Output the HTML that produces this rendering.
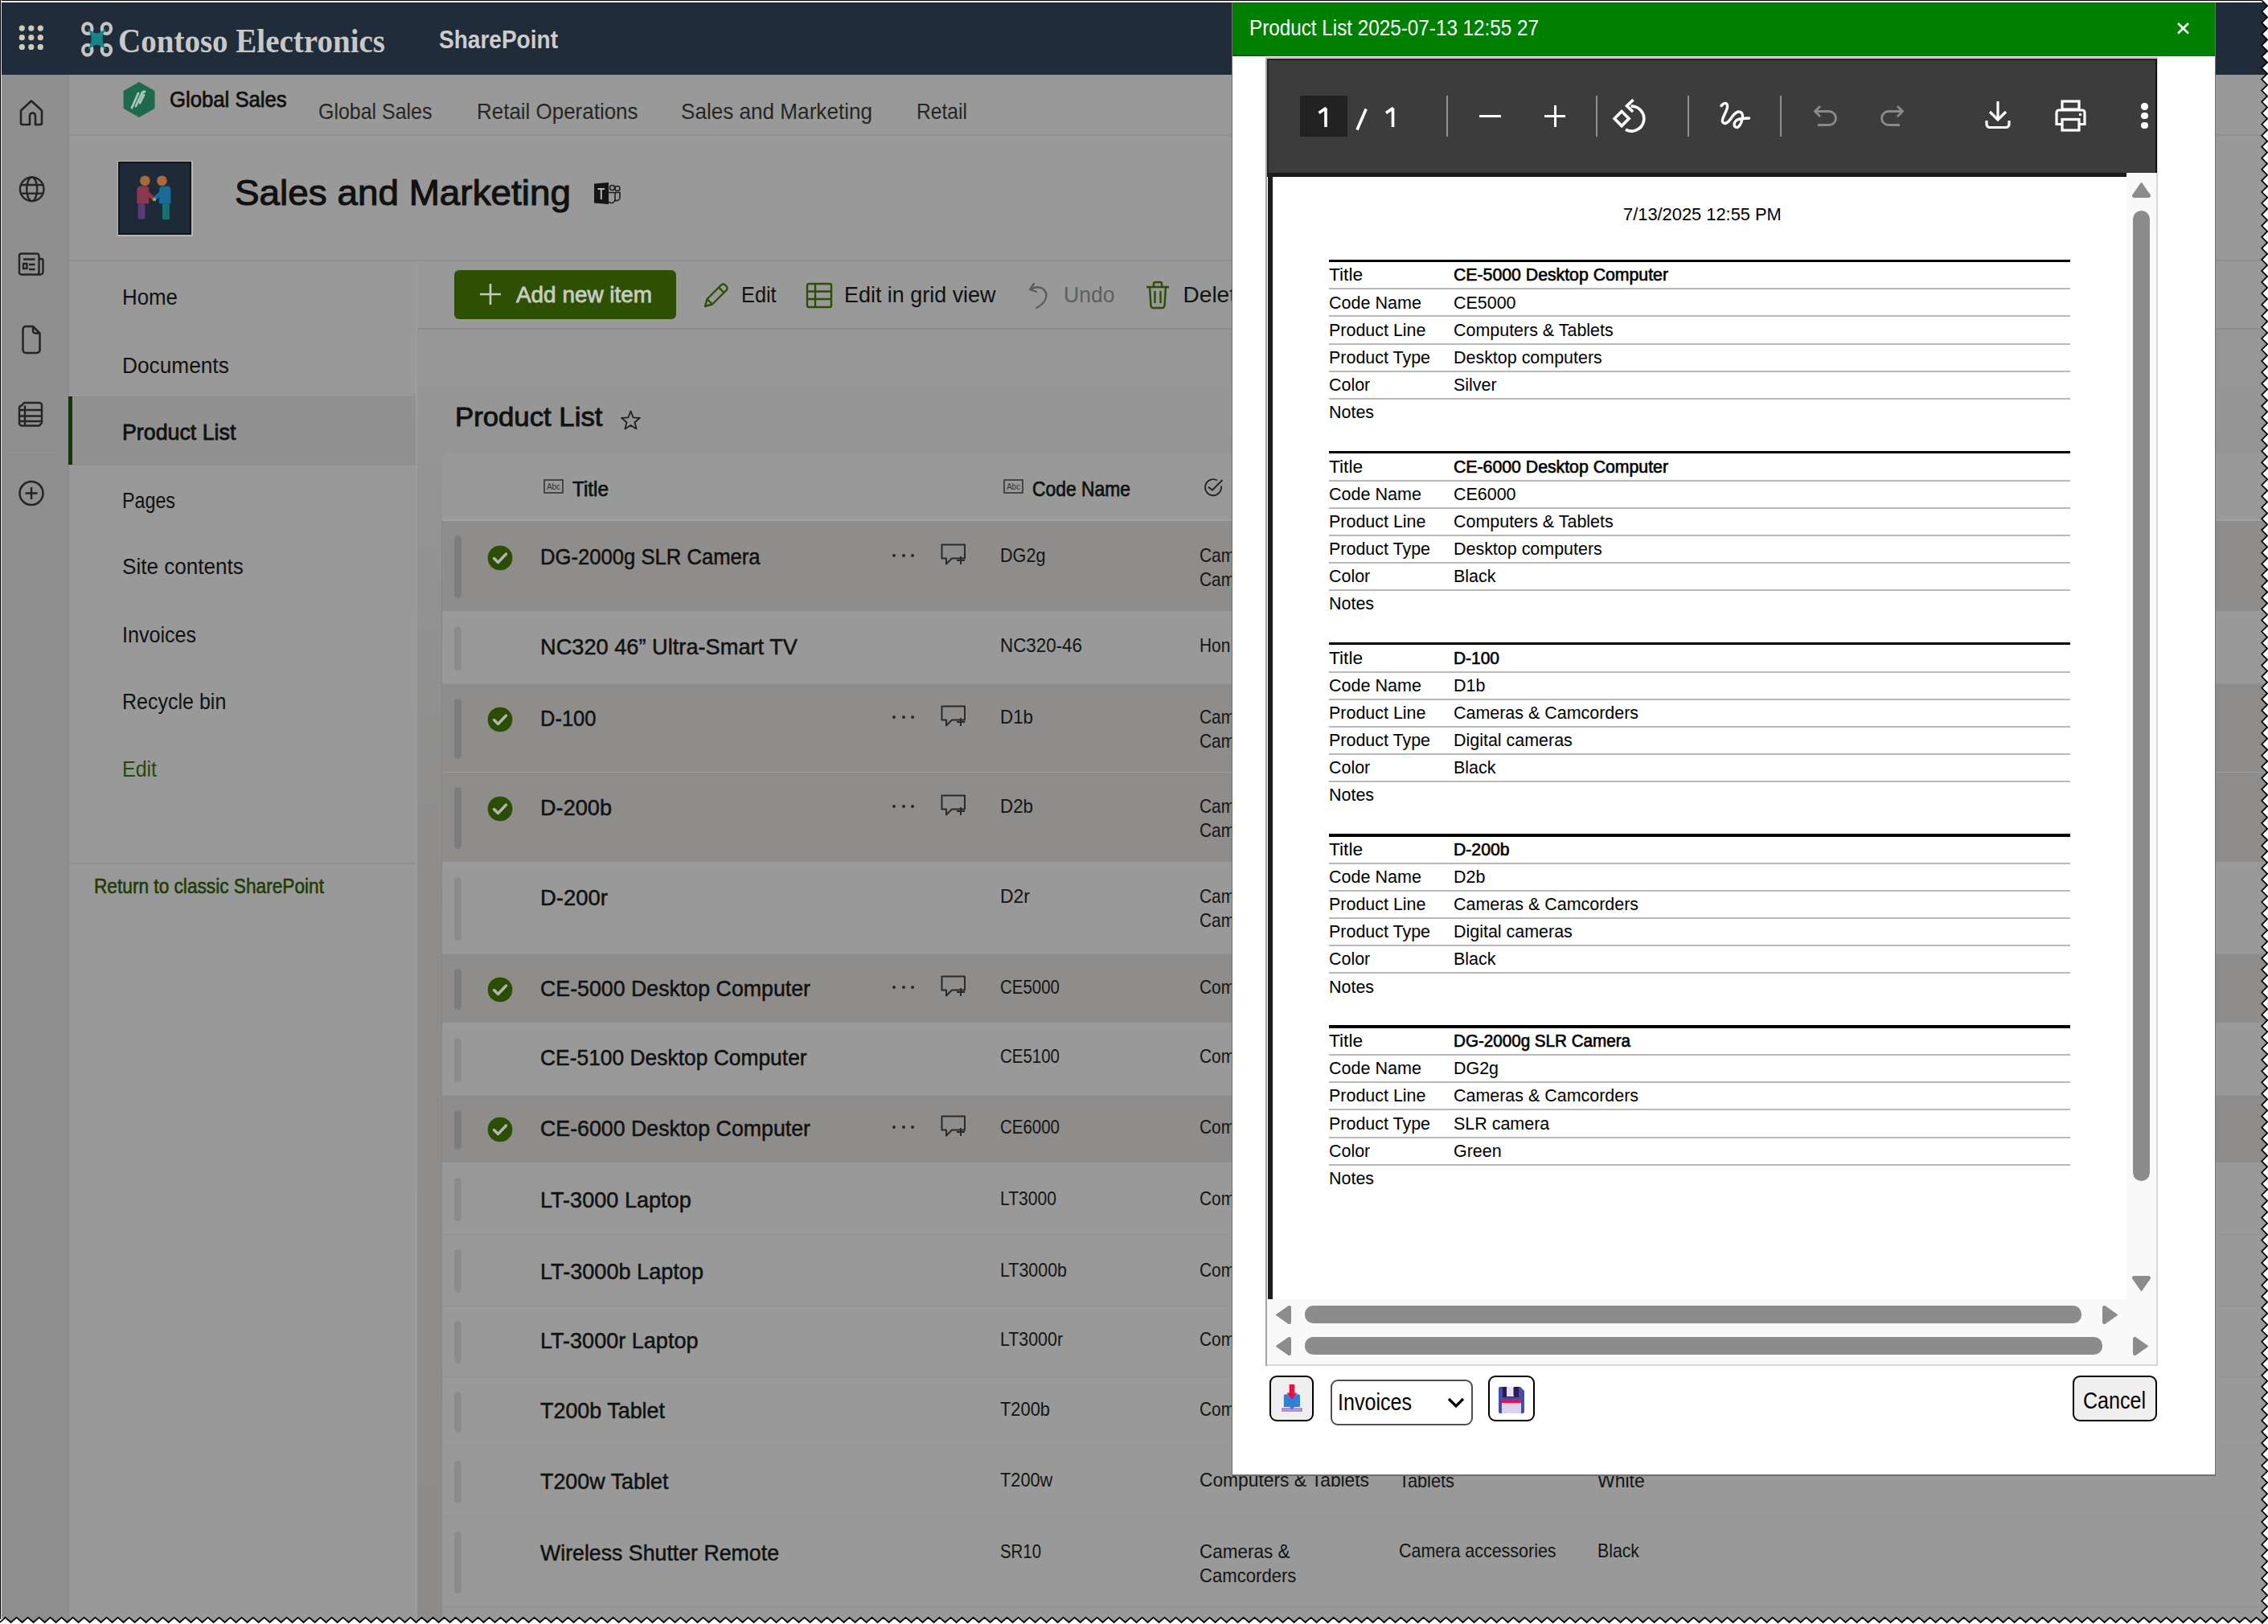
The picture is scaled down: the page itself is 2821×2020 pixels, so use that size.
<!DOCTYPE html>
<html><head><meta charset="utf-8"><title>Product List</title>
<style>html,body{margin:0;padding:0;width:2821px;height:2020px;overflow:hidden;background:#fff;position:relative}
body{font-family:'Liberation Sans',sans-serif}</style></head><body>
<div style="position:absolute;left:0px;top:0px;width:2821px;height:2020px;background:#999999;"></div>
<div style="position:absolute;left:0px;top:0px;width:2821px;height:93px;background:#202c3a;"></div>
<svg style="position:absolute;left:0px;top:0px;" width="80" height="90" viewBox="0 0 80 90"><circle cx="27.3" cy="35.1" r="3.6" fill="#cfc9b8"/><circle cx="27.3" cy="46.7" r="3.6" fill="#cfc9b8"/><circle cx="27.3" cy="58.4" r="3.6" fill="#cfc9b8"/><circle cx="38.8" cy="35.1" r="3.6" fill="#cfc9b8"/><circle cx="38.8" cy="46.7" r="3.6" fill="#cfc9b8"/><circle cx="38.8" cy="58.4" r="3.6" fill="#cfc9b8"/><circle cx="50.3" cy="35.1" r="3.6" fill="#cfc9b8"/><circle cx="50.3" cy="46.7" r="3.6" fill="#cfc9b8"/><circle cx="50.3" cy="58.4" r="3.6" fill="#cfc9b8"/></svg>
<svg style="position:absolute;left:90px;top:15px;" width="60" height="65" viewBox="0 0 60 65">
<g fill="none" stroke="#c6c4c2" stroke-width="4.3">
<ellipse cx="18.8" cy="20.5" rx="5.6" ry="6.3"/><ellipse cx="42.4" cy="20.5" rx="5.6" ry="6.3"/><ellipse cx="18.8" cy="47.2" rx="5.6" ry="6.3"/><ellipse cx="42.4" cy="47.2" rx="5.6" ry="6.3"/>
</g>
<path d="M18.5 19.5 Q26 26 30.6 26.5 Q35 26 42.5 19.5 Q37 28 37.5 33.8 Q38 40 42.5 48 Q35 41 30.6 40.5 Q26 41 18.5 48 Q23.5 40 23.7 33.8 Q23.5 28 18.5 19.5 Z" fill="#148585"/>
</svg>
<div id="t0" style="position:absolute;left:147px;top:29.64px;white-space:nowrap;font-family:'Liberation Serif', serif;font-size:42px;line-height:42px;font-weight:700;color:#c8c8c8;transform:scaleX(0.9290);transform-origin:0 0;">Contoso Electronics</div>
<div id="t1" style="position:absolute;left:545.6px;top:33.00px;white-space:nowrap;font-family:'Liberation Sans', sans-serif;font-size:32px;line-height:32px;font-weight:700;color:#cdcdcd;transform:scaleX(0.8761);transform-origin:0 0;">SharePoint</div>
<div style="position:absolute;left:0px;top:93px;width:86px;height:1927px;background:#8f8f8f;"></div>
<div style="position:absolute;left:84px;top:93px;width:2px;height:1927px;background:#8b8b8b;"></div>
<div style="position:absolute;left:2px;top:565px;width:73px;height:1px;background:#8a8a8a;"></div>
<svg style="position:absolute;left:22px;top:122px;" width="34" height="36" viewBox="0 0 34 36"><path d="M4 15.5 L17 3.5 L30 15.5 V31 a2 2 0 0 1 -2 2 H22 V22 a3.5 3.5 0 0 0 -7 0 V33 H6 a2 2 0 0 1 -2 -2 Z" fill="none" stroke="#242424" stroke-width="2.6" stroke-linejoin="round"/></svg>
<svg style="position:absolute;left:22px;top:217px;" width="36" height="36" viewBox="0 0 36 36"><g fill="none" stroke="#242424" stroke-width="2.4"><circle cx="17.7" cy="18.3" r="14.8"/><ellipse cx="17.7" cy="18.3" rx="6.5" ry="14.8"/><path d="M3 13 H32.4 M3 23.6 H32.4"/></g></svg>
<svg style="position:absolute;left:20px;top:313px;" width="38" height="31" viewBox="0 0 38 31"><g fill="none" stroke="#242424" stroke-width="2.4" stroke-linejoin="round"><path d="M4 5 a2.5 2.5 0 0 1 2.5 -2.5 H26 a2.5 2.5 0 0 1 2.5 2.5 V26 a2.5 2.5 0 0 1 -2.5 2.5 H6.5 A2.5 2.5 0 0 1 4 26 Z"/><path d="M28.5 9 H31.5 a2 2 0 0 1 2 2 V25 a3.5 3.5 0 0 1 -3.5 3.5 H26"/><path d="M9 9.5 H23.5 M16 16 H23.5 M16 22 H23.5"/><rect x="9" y="15" width="4.5" height="6"/></g></svg>
<svg style="position:absolute;left:24px;top:403px;" width="30" height="40" viewBox="0 0 30 40"><path d="M4.5 6.5 a3.5 3.5 0 0 1 3.5 -3.5 H17 L25.5 11.5 V32.5 a3.5 3.5 0 0 1 -3.5 3.5 H8 a3.5 3.5 0 0 1 -3.5 -3.5 Z M17 3 V8.5 a3 3 0 0 0 3 3 H25.5" fill="none" stroke="#242424" stroke-width="2.5" stroke-linejoin="round"/></svg>
<svg style="position:absolute;left:21px;top:498px;" width="36" height="36" viewBox="0 0 36 36"><g fill="none" stroke="#242424" stroke-width="2.4" stroke-linejoin="round"><path d="M6 6.5 L9 3 H28 a3 3 0 0 1 3 3 V28 L28 31.5 H6 a3 3 0 0 1 -3 -3 V9.5 a3 3 0 0 1 3 -3 Z" /><path d="M3 12 H31 M3 19.5 H31 M3 26 H31 M10 6.5 V31.5"/></g></svg>
<svg style="position:absolute;left:21px;top:596px;" width="36" height="36" viewBox="0 0 36 36"><g fill="none" stroke="#242424" stroke-width="2.5"><circle cx="18" cy="17.5" r="14.5"/><path d="M18 10 V25 M10.5 17.5 H25.5"/></g></svg>
<div style="position:absolute;left:86px;top:93px;width:2735px;height:76px;background:#999999;"></div>
<div style="position:absolute;left:86px;top:167px;width:2735px;height:2px;background:#8f8f8f;"></div>
<svg style="position:absolute;left:153px;top:102px;" width="40" height="45" viewBox="0 0 40 45"><path d="M20 1 L38.5 11.5 V32.5 L20 43 L1.5 32.5 V11.5 Z" fill="#1f6a4f" stroke="#1f6a4f" stroke-width="2" stroke-linejoin="round"/><g stroke="#a8c8b8" stroke-width="2.8" stroke-linecap="round" fill="none"><path d="M11 32 L19 14"/><path d="M16 30 L23 15 Q24 12 27 12"/><path d="M21 26 L26 16"/></g></svg>
<div id="t2" style="position:absolute;left:211px;top:110.10px;white-space:nowrap;font-family:'Liberation Sans', sans-serif;font-size:28px;line-height:28px;font-weight:400;color:#111111;transform:scaleX(0.9177);transform-origin:0 0;-webkit-text-stroke:0.75px #111111;">Global Sales</div>
<div id="t3" style="position:absolute;left:395.6px;top:125.00px;white-space:nowrap;font-family:'Liberation Sans', sans-serif;font-size:28px;line-height:28px;font-weight:400;color:#262626;transform:scaleX(0.8906);transform-origin:0 0;">Global Sales</div>
<div id="t4" style="position:absolute;left:592.5px;top:125.00px;white-space:nowrap;font-family:'Liberation Sans', sans-serif;font-size:28px;line-height:28px;font-weight:400;color:#262626;transform:scaleX(0.9268);transform-origin:0 0;">Retail Operations</div>
<div id="t5" style="position:absolute;left:847px;top:125.00px;white-space:nowrap;font-family:'Liberation Sans', sans-serif;font-size:28px;line-height:28px;font-weight:400;color:#262626;transform:scaleX(0.9324);transform-origin:0 0;">Sales and Marketing</div>
<div id="t6" style="position:absolute;left:1140px;top:125.00px;white-space:nowrap;font-family:'Liberation Sans', sans-serif;font-size:28px;line-height:28px;font-weight:400;color:#262626;transform:scaleX(0.8800);transform-origin:0 0;">Retail</div>
<div style="position:absolute;left:86px;top:169px;width:2735px;height:155px;background:#999999;"></div>
<div style="position:absolute;left:86px;top:323px;width:2735px;height:2px;background:#8f8f8f;"></div>
<div style="position:absolute;left:145.5px;top:199.5px;width:94px;height:94px;background:#bab6b2;"></div>
<svg style="position:absolute;left:147px;top:201px;" width="91" height="91" viewBox="0 0 91 91"><rect x="0" y="0" width="91" height="91" fill="#0c1520"/><rect x="2" y="2" width="87" height="87" fill="#1f2a38"/>
<g>
<circle cx="33.4" cy="23.7" r="6.3" fill="#a86a38"/><circle cx="54.4" cy="23.7" r="6.3" fill="#a86a38"/>
<path d="M23.4 52.2 V35 a4.5 4.5 0 0 1 4.5 -4.5 H34 a4.5 4.5 0 0 1 4.2 3 V52.2 Z" fill="#8a3850"/>
<path d="M36 39 L44.5 46.5" stroke="#8a3850" stroke-width="5" stroke-linecap="round"/>
<path d="M51 52.2 V35 a4.5 4.5 0 0 1 4.5 -4.5 H61 a4.5 4.5 0 0 1 4.4 4.5 V52.2 Z" fill="#1a6a9a"/>
<path d="M53 39 L45 46.5" stroke="#1a6a9a" stroke-width="5" stroke-linecap="round"/>
<circle cx="45" cy="47" r="2.2" fill="#b0a040"/>
<rect x="24.7" y="52.2" width="8.7" height="19.4" rx="1.5" fill="#5a3a78"/>
<rect x="55" y="52.2" width="8.8" height="20" rx="1.5" fill="#1a7070"/>
</g></svg>
<div id="t7" style="position:absolute;left:292px;top:216.75px;white-space:nowrap;font-family:'Liberation Sans', sans-serif;font-size:45px;line-height:45px;font-weight:400;color:#111;transform:scaleX(1.0189);transform-origin:0 0;-webkit-text-stroke:1.1px #111;">Sales and Marketing</div>
<svg style="position:absolute;left:735px;top:222px;" width="40" height="36" viewBox="0 0 40 36"><g fill="none" stroke="#1e1e1e" stroke-width="1.6"><circle cx="26.5" cy="11.5" r="3"/><circle cx="33" cy="12.5" r="3"/><path d="M21 17.5 H30 V26 a4.5 4.5 0 0 1 -9 0 Z"/><path d="M30 17.5 H36 V24 a4 4 0 0 1 -6 3"/></g><path d="M4 6.5 L22 5 V32 L4 30.5 Z" fill="#151515"/><path d="M8.5 13 H17 M12.8 13 V26" stroke="#b8b8b8" stroke-width="2"/></svg>
<div style="position:absolute;left:86px;top:325px;width:432px;height:1695px;background:#999999;"></div>
<div style="position:absolute;left:517px;top:325px;width:1.5px;height:1695px;background:#9c9c9c;"></div>
<div style="position:absolute;left:86px;top:493px;width:431px;height:85px;background:#919191;"></div>
<div style="position:absolute;left:86px;top:492.5px;width:431px;height:1.5px;background:#8d8d8d;"></div>
<div style="position:absolute;left:86px;top:577px;width:431px;height:1.5px;background:#8d8d8d;"></div>
<div style="position:absolute;left:85px;top:493px;width:4.5px;height:85px;background:#0e3a00;"></div>
<div style="position:absolute;left:86px;top:1073px;width:431px;height:2px;background:#8f8f8f;"></div>
<div id="t8" style="position:absolute;left:151.7px;top:355.82px;white-space:nowrap;font-family:'Liberation Sans', sans-serif;font-size:27.5px;line-height:27.5px;font-weight:400;color:#111111;transform:scaleX(0.9406);transform-origin:0 0;">Home</div>
<div id="t9" style="position:absolute;left:151.7px;top:440.82px;white-space:nowrap;font-family:'Liberation Sans', sans-serif;font-size:27.5px;line-height:27.5px;font-weight:400;color:#111111;transform:scaleX(0.9548);transform-origin:0 0;">Documents</div>
<div id="t10" style="position:absolute;left:151.7px;top:523.83px;white-space:nowrap;font-family:'Liberation Sans', sans-serif;font-size:27.5px;line-height:27.5px;font-weight:400;color:#111111;transform:scaleX(0.9737);transform-origin:0 0;-webkit-text-stroke:0.8px #111111;">Product List</div>
<div id="t11" style="position:absolute;left:151.7px;top:608.53px;white-space:nowrap;font-family:'Liberation Sans', sans-serif;font-size:27.5px;line-height:27.5px;font-weight:400;color:#111111;transform:scaleX(0.8463);transform-origin:0 0;">Pages</div>
<div id="t12" style="position:absolute;left:151.7px;top:691.23px;white-space:nowrap;font-family:'Liberation Sans', sans-serif;font-size:27.5px;line-height:27.5px;font-weight:400;color:#111111;transform:scaleX(0.9479);transform-origin:0 0;">Site contents</div>
<div id="t13" style="position:absolute;left:151.7px;top:775.83px;white-space:nowrap;font-family:'Liberation Sans', sans-serif;font-size:27.5px;line-height:27.5px;font-weight:400;color:#111111;transform:scaleX(0.9119);transform-origin:0 0;">Invoices</div>
<div id="t14" style="position:absolute;left:151.7px;top:858.53px;white-space:nowrap;font-family:'Liberation Sans', sans-serif;font-size:27.5px;line-height:27.5px;font-weight:400;color:#111111;transform:scaleX(0.9096);transform-origin:0 0;">Recycle bin</div>
<div id="t15" style="position:absolute;left:151.7px;top:942.83px;white-space:nowrap;font-family:'Liberation Sans', sans-serif;font-size:27.5px;line-height:27.5px;font-weight:400;color:#284a06;transform:scaleX(0.9074);transform-origin:0 0;">Edit</div>
<div id="t16" style="position:absolute;left:116.6px;top:1090.45px;white-space:nowrap;font-family:'Liberation Sans', sans-serif;font-size:25px;line-height:25px;font-weight:400;color:#1f3c06;transform:scaleX(0.9067);transform-origin:0 0;-webkit-text-stroke:0.6px #1f3c06;">Return to classic SharePoint</div>
<div style="position:absolute;left:519px;top:325px;width:2302px;height:84px;background:#999999;"></div>
<div style="position:absolute;left:519px;top:408px;width:2302px;height:2px;background:#8c8c8c;"></div>
<div style="position:absolute;left:565px;top:336px;width:276px;height:61px;border-radius:6px;background:#2d5003"></div>
<svg style="position:absolute;left:595px;top:351px;" width="30" height="30" viewBox="0 0 30 30"><path d="M15 2 V28 M2 15 H28" stroke="#c4c9bd" stroke-width="2.6"/></svg>
<div id="t17" style="position:absolute;left:642px;top:352.17px;white-space:nowrap;font-family:'Liberation Sans', sans-serif;font-size:28.5px;line-height:28.5px;font-weight:400;color:#c8ccc4;transform:scaleX(0.9787);transform-origin:0 0;-webkit-text-stroke:0.8px #c8ccc4;">Add new item</div>
<svg style="position:absolute;left:873px;top:349px;" width="36" height="36" viewBox="0 0 36 36"><path d="M4 32 L6.5 23 L24 5.5 a3.5 3.5 0 0 1 5 0 l1.5 1.5 a3.5 3.5 0 0 1 0 5 L13 29.5 Z M21 8.5 L27.5 15 M6.5 23 L13 29.5" fill="none" stroke="#2c4e05" stroke-width="2.4" stroke-linejoin="round"/></svg>
<div id="t18" style="position:absolute;left:922px;top:352.60px;white-space:nowrap;font-family:'Liberation Sans', sans-serif;font-size:28px;line-height:28px;font-weight:400;color:#111111;transform:scaleX(0.9036);transform-origin:0 0;">Edit</div>
<svg style="position:absolute;left:1002px;top:350px;" width="34" height="34" viewBox="0 0 34 34"><g fill="none" stroke="#2c4e05" stroke-width="2.4"><rect x="2" y="3" width="30" height="29" rx="2"/><path d="M2 12.5 H32 M2 22 H32 M12 3 V32"/></g></svg>
<div id="t19" style="position:absolute;left:1050px;top:352.60px;white-space:nowrap;font-family:'Liberation Sans', sans-serif;font-size:28px;line-height:28px;font-weight:400;color:#111111;transform:scaleX(0.9613);transform-origin:0 0;">Edit in grid view</div>
<svg style="position:absolute;left:1278px;top:349px;" width="28" height="36" viewBox="0 0 28 36"><path d="M8 4 L3 11 L11 14 M3.5 11 Q12 6 19 10 Q26 15 22 24 Q19 30 11 34" fill="none" stroke="#5c5c5c" stroke-width="2.3" stroke-linejoin="round" stroke-linecap="round"/></svg>
<div id="t20" style="position:absolute;left:1322.5px;top:352.60px;white-space:nowrap;font-family:'Liberation Sans', sans-serif;font-size:28px;line-height:28px;font-weight:400;color:#5f5f5f;transform:scaleX(0.9486);transform-origin:0 0;">Undo</div>
<svg style="position:absolute;left:1424px;top:349px;" width="32" height="36" viewBox="0 0 32 36"><g fill="none" stroke="#2c4e05" stroke-width="2.4" stroke-linejoin="round"><path d="M2 8 H30 M11 8 V4 a2 2 0 0 1 2 -2 h6 a2 2 0 0 1 2 2 V8 M6 8 L7.5 31 a3 3 0 0 0 3 3 h11 a3 3 0 0 0 3 -3 L26 8 M12.5 13 V28 M19.5 13 V28"/></g></svg>
<div id="t21" style="position:absolute;left:1471.6px;top:352.60px;white-space:nowrap;font-family:'Liberation Sans', sans-serif;font-size:28px;line-height:28px;font-weight:400;color:#111111;">Delete</div>
<div style="position:absolute;left:519px;top:410px;width:2302px;height:1610px;background:linear-gradient(to bottom, #979797 0px, #939393 250px, #8e8d8c 640px, #8d8c8b 100%);"></div>
<div id="t22" style="position:absolute;left:565.6px;top:501.95px;white-space:nowrap;font-family:'Liberation Sans', sans-serif;font-size:33px;line-height:33px;font-weight:400;color:#111;transform:scaleX(1.0525);transform-origin:0 0;-webkit-text-stroke:0.9px #111;">Product List</div>
<svg style="position:absolute;left:771px;top:509px;" width="27" height="27" viewBox="0 0 27 27"><path d="M13.5 2.5 L16.6 10.3 L25 10.8 L18.5 16.2 L20.6 24.4 L13.5 19.9 L6.4 24.4 L8.5 16.2 L2 10.8 L10.4 10.3 Z" fill="none" stroke="#202020" stroke-width="1.8" stroke-linejoin="round"/></svg>
<div style="position:absolute;left:550px;top:563px;width:2300px;height:1500px;border-radius:9px;background:#999999"></div>
<div style="position:absolute;left:550px;top:646px;width:2271px;height:2.5px;background:#a2a2a2;"></div>
<svg style="position:absolute;left:676px;top:596px;" width="26" height="19" viewBox="0 0 26 19"><rect x="1" y="1" width="23" height="16" fill="none" stroke="#333" stroke-width="1.6"/><text x="12.5" y="13" font-family="Liberation Sans" font-size="10" text-anchor="middle" fill="#333">Abc</text></svg>
<div id="t23" style="position:absolute;left:712px;top:594.70px;white-space:nowrap;font-family:'Liberation Sans', sans-serif;font-size:26px;line-height:26px;font-weight:400;color:#111111;transform:scaleX(0.9345);transform-origin:0 0;-webkit-text-stroke:0.75px #111111;">Title</div>
<svg style="position:absolute;left:1248px;top:596px;" width="26" height="19" viewBox="0 0 26 19"><rect x="1" y="1" width="23" height="16" fill="none" stroke="#333" stroke-width="1.6"/><text x="12.5" y="13" font-family="Liberation Sans" font-size="10" text-anchor="middle" fill="#333">Abc</text></svg>
<div id="t24" style="position:absolute;left:1284px;top:594.70px;white-space:nowrap;font-family:'Liberation Sans', sans-serif;font-size:26px;line-height:26px;font-weight:400;color:#111111;transform:scaleX(0.8794);transform-origin:0 0;-webkit-text-stroke:0.75px #111111;">Code Name</div>
<svg style="position:absolute;left:1495px;top:592px;" width="30" height="30" viewBox="0 0 30 30"><g fill="none" stroke="#222" stroke-width="1.9"><path d="M23.85 12.46 A10 10 0 1 1 19 5.54"/><path d="M7.8 13.8 L13 17.5 L25.5 5"/></g></svg>
<div style="position:absolute;left:550px;top:648px;width:2271px;height:113px;background:#8e8d8c;"></div>
<div style="position:absolute;left:550px;top:760px;width:2271px;height:2px;background:#9c9c9c;"></div>
<div style="position:absolute;left:565px;top:665.5px;width:9px;height:78px;border-radius:4.5px;background:#7c7c7c"></div>
<svg style="position:absolute;left:605px;top:677px;" width="34" height="34" viewBox="0 0 34 34"><circle cx="17" cy="17" r="16" fill="#2b4d04" stroke="#a0a0a0" stroke-width="0.8"/><path d="M9.5 17.5 L14.5 22.5 L24.5 12" fill="none" stroke="#b4b4b4" stroke-width="3.4" stroke-linecap="round" stroke-linejoin="round"/></svg>
<div style="position:absolute;left:1110.0px;top:689px;width:4px;height:4px;background:#2a2a2a;border-radius:2px"></div>
<div style="position:absolute;left:1121.5px;top:689px;width:4px;height:4px;background:#2a2a2a;border-radius:2px"></div>
<div style="position:absolute;left:1133.0px;top:689px;width:4px;height:4px;background:#2a2a2a;border-radius:2px"></div>
<svg style="position:absolute;left:1169px;top:675px;" width="35" height="32" viewBox="0 0 35 32"><path d="M2.5 2.5 H31 V19.5 H15 L8 26.5 V19.5 H2.5 Z" fill="none" stroke="#2a2a2a" stroke-width="2" stroke-linejoin="round"/><path d="M26 17 V27 M21 22 H31" stroke="#2a2a2a" stroke-width="2"/><rect x="20" y="16" width="12" height="12" fill="#8e8d8c" opacity="0"/></svg>
<div id="t25" style="position:absolute;left:672px;top:679.20px;white-space:nowrap;font-family:'Liberation Sans', sans-serif;font-size:28px;line-height:28px;font-weight:400;color:#111111;transform:scaleX(0.9156);transform-origin:0 0;-webkit-text-stroke:0.5px #111111;">DG-2000g SLR Camera</div>
<div id="t26" style="position:absolute;left:1244px;top:679.10px;white-space:nowrap;font-family:'Liberation Sans', sans-serif;font-size:24px;line-height:24px;font-weight:400;color:#141414;transform:scaleX(0.8995);transform-origin:0 0;">DG2g</div>
<div id="t27" style="position:absolute;left:1491.6px;top:679.10px;white-space:nowrap;font-family:'Liberation Sans', sans-serif;font-size:24px;line-height:24px;font-weight:400;color:#141414;transform:scaleX(0.8700);transform-origin:0 0;">Cam</div>
<div id="t28" style="position:absolute;left:1491.6px;top:709.10px;white-space:nowrap;font-family:'Liberation Sans', sans-serif;font-size:24px;line-height:24px;font-weight:400;color:#141414;transform:scaleX(0.8700);transform-origin:0 0;">Cam</div>
<div style="position:absolute;left:550px;top:761px;width:2271px;height:90px;background:#999999;"></div>
<div style="position:absolute;left:550px;top:850px;width:2271px;height:2px;background:#939393;"></div>
<div style="position:absolute;left:565px;top:778.5px;width:9px;height:55px;border-radius:4.5px;background:#8b8b8b"></div>
<div id="t29" style="position:absolute;left:672px;top:790.70px;white-space:nowrap;font-family:'Liberation Sans', sans-serif;font-size:28px;line-height:28px;font-weight:400;color:#111111;transform:scaleX(0.9716);transform-origin:0 0;-webkit-text-stroke:0.5px #111111;">NC320 46&#8221; Ultra-Smart TV</div>
<div id="t30" style="position:absolute;left:1244px;top:790.60px;white-space:nowrap;font-family:'Liberation Sans', sans-serif;font-size:24px;line-height:24px;font-weight:400;color:#141414;transform:scaleX(0.9323);transform-origin:0 0;">NC320-46</div>
<div id="t31" style="position:absolute;left:1491.6px;top:790.60px;white-space:nowrap;font-family:'Liberation Sans', sans-serif;font-size:24px;line-height:24px;font-weight:400;color:#141414;transform:scaleX(0.8700);transform-origin:0 0;">Hon</div>
<div style="position:absolute;left:550px;top:851px;width:2271px;height:110px;background:#8e8d8c;"></div>
<div style="position:absolute;left:550px;top:960px;width:2271px;height:2px;background:#9c9c9c;"></div>
<div style="position:absolute;left:565px;top:868.5px;width:9px;height:75px;border-radius:4.5px;background:#7c7c7c"></div>
<svg style="position:absolute;left:605px;top:877.5px;" width="34" height="34" viewBox="0 0 34 34"><circle cx="17" cy="17" r="16" fill="#2b4d04" stroke="#a0a0a0" stroke-width="0.8"/><path d="M9.5 17.5 L14.5 22.5 L24.5 12" fill="none" stroke="#b4b4b4" stroke-width="3.4" stroke-linecap="round" stroke-linejoin="round"/></svg>
<div style="position:absolute;left:1110.0px;top:889.5px;width:4px;height:4px;background:#2a2a2a;border-radius:2px"></div>
<div style="position:absolute;left:1121.5px;top:889.5px;width:4px;height:4px;background:#2a2a2a;border-radius:2px"></div>
<div style="position:absolute;left:1133.0px;top:889.5px;width:4px;height:4px;background:#2a2a2a;border-radius:2px"></div>
<svg style="position:absolute;left:1169px;top:875.5px;" width="35" height="32" viewBox="0 0 35 32"><path d="M2.5 2.5 H31 V19.5 H15 L8 26.5 V19.5 H2.5 Z" fill="none" stroke="#2a2a2a" stroke-width="2" stroke-linejoin="round"/><path d="M26 17 V27 M21 22 H31" stroke="#2a2a2a" stroke-width="2"/><rect x="20" y="16" width="12" height="12" fill="#8e8d8c" opacity="0"/></svg>
<div id="t32" style="position:absolute;left:672px;top:879.70px;white-space:nowrap;font-family:'Liberation Sans', sans-serif;font-size:28px;line-height:28px;font-weight:400;color:#111111;transform:scaleX(0.9113);transform-origin:0 0;-webkit-text-stroke:0.5px #111111;">D-100</div>
<div id="t33" style="position:absolute;left:1244px;top:879.60px;white-space:nowrap;font-family:'Liberation Sans', sans-serif;font-size:24px;line-height:24px;font-weight:400;color:#141414;transform:scaleX(0.9312);transform-origin:0 0;">D1b</div>
<div id="t34" style="position:absolute;left:1491.6px;top:879.60px;white-space:nowrap;font-family:'Liberation Sans', sans-serif;font-size:24px;line-height:24px;font-weight:400;color:#141414;transform:scaleX(0.8700);transform-origin:0 0;">Cam</div>
<div id="t35" style="position:absolute;left:1491.6px;top:909.60px;white-space:nowrap;font-family:'Liberation Sans', sans-serif;font-size:24px;line-height:24px;font-weight:400;color:#141414;transform:scaleX(0.8700);transform-origin:0 0;">Cam</div>
<div style="position:absolute;left:550px;top:961px;width:2271px;height:112px;background:#8e8d8c;"></div>
<div style="position:absolute;left:550px;top:1072px;width:2271px;height:2px;background:#9c9c9c;"></div>
<div style="position:absolute;left:565px;top:978.5px;width:9px;height:77px;border-radius:4.5px;background:#7c7c7c"></div>
<svg style="position:absolute;left:605px;top:989px;" width="34" height="34" viewBox="0 0 34 34"><circle cx="17" cy="17" r="16" fill="#2b4d04" stroke="#a0a0a0" stroke-width="0.8"/><path d="M9.5 17.5 L14.5 22.5 L24.5 12" fill="none" stroke="#b4b4b4" stroke-width="3.4" stroke-linecap="round" stroke-linejoin="round"/></svg>
<div style="position:absolute;left:1110.0px;top:1001px;width:4px;height:4px;background:#2a2a2a;border-radius:2px"></div>
<div style="position:absolute;left:1121.5px;top:1001px;width:4px;height:4px;background:#2a2a2a;border-radius:2px"></div>
<div style="position:absolute;left:1133.0px;top:1001px;width:4px;height:4px;background:#2a2a2a;border-radius:2px"></div>
<svg style="position:absolute;left:1169px;top:987px;" width="35" height="32" viewBox="0 0 35 32"><path d="M2.5 2.5 H31 V19.5 H15 L8 26.5 V19.5 H2.5 Z" fill="none" stroke="#2a2a2a" stroke-width="2" stroke-linejoin="round"/><path d="M26 17 V27 M21 22 H31" stroke="#2a2a2a" stroke-width="2"/><rect x="20" y="16" width="12" height="12" fill="#8e8d8c" opacity="0"/></svg>
<div id="t36" style="position:absolute;left:672px;top:991.20px;white-space:nowrap;font-family:'Liberation Sans', sans-serif;font-size:28px;line-height:28px;font-weight:400;color:#111111;transform:scaleX(0.9690);transform-origin:0 0;-webkit-text-stroke:0.5px #111111;">D-200b</div>
<div id="t37" style="position:absolute;left:1244px;top:991.10px;white-space:nowrap;font-family:'Liberation Sans', sans-serif;font-size:24px;line-height:24px;font-weight:400;color:#141414;transform:scaleX(0.9312);transform-origin:0 0;">D2b</div>
<div id="t38" style="position:absolute;left:1491.6px;top:991.10px;white-space:nowrap;font-family:'Liberation Sans', sans-serif;font-size:24px;line-height:24px;font-weight:400;color:#141414;transform:scaleX(0.8700);transform-origin:0 0;">Cam</div>
<div id="t39" style="position:absolute;left:1491.6px;top:1021.10px;white-space:nowrap;font-family:'Liberation Sans', sans-serif;font-size:24px;line-height:24px;font-weight:400;color:#141414;transform:scaleX(0.8700);transform-origin:0 0;">Cam</div>
<div style="position:absolute;left:550px;top:1073px;width:2271px;height:114px;background:#999999;"></div>
<div style="position:absolute;left:550px;top:1186px;width:2271px;height:2px;background:#939393;"></div>
<div style="position:absolute;left:565px;top:1090.5px;width:9px;height:79px;border-radius:4.5px;background:#8b8b8b"></div>
<div id="t40" style="position:absolute;left:672px;top:1102.70px;white-space:nowrap;font-family:'Liberation Sans', sans-serif;font-size:28px;line-height:28px;font-weight:400;color:#111111;transform:scaleX(0.9814);transform-origin:0 0;-webkit-text-stroke:0.5px #111111;">D-200r</div>
<div id="t41" style="position:absolute;left:1244px;top:1102.60px;white-space:nowrap;font-family:'Liberation Sans', sans-serif;font-size:24px;line-height:24px;font-weight:400;color:#141414;transform:scaleX(0.9568);transform-origin:0 0;">D2r</div>
<div id="t42" style="position:absolute;left:1491.6px;top:1102.60px;white-space:nowrap;font-family:'Liberation Sans', sans-serif;font-size:24px;line-height:24px;font-weight:400;color:#141414;transform:scaleX(0.8700);transform-origin:0 0;">Cam</div>
<div id="t43" style="position:absolute;left:1491.6px;top:1132.60px;white-space:nowrap;font-family:'Liberation Sans', sans-serif;font-size:24px;line-height:24px;font-weight:400;color:#141414;transform:scaleX(0.8700);transform-origin:0 0;">Cam</div>
<div style="position:absolute;left:550px;top:1187px;width:2271px;height:86px;background:#8e8d8c;"></div>
<div style="position:absolute;left:550px;top:1272px;width:2271px;height:2px;background:#9c9c9c;"></div>
<div style="position:absolute;left:565px;top:1204.5px;width:9px;height:51px;border-radius:4.5px;background:#7c7c7c"></div>
<svg style="position:absolute;left:605px;top:1213.5px;" width="34" height="34" viewBox="0 0 34 34"><circle cx="17" cy="17" r="16" fill="#2b4d04" stroke="#a0a0a0" stroke-width="0.8"/><path d="M9.5 17.5 L14.5 22.5 L24.5 12" fill="none" stroke="#b4b4b4" stroke-width="3.4" stroke-linecap="round" stroke-linejoin="round"/></svg>
<div style="position:absolute;left:1110.0px;top:1225.5px;width:4px;height:4px;background:#2a2a2a;border-radius:2px"></div>
<div style="position:absolute;left:1121.5px;top:1225.5px;width:4px;height:4px;background:#2a2a2a;border-radius:2px"></div>
<div style="position:absolute;left:1133.0px;top:1225.5px;width:4px;height:4px;background:#2a2a2a;border-radius:2px"></div>
<svg style="position:absolute;left:1169px;top:1211.5px;" width="35" height="32" viewBox="0 0 35 32"><path d="M2.5 2.5 H31 V19.5 H15 L8 26.5 V19.5 H2.5 Z" fill="none" stroke="#2a2a2a" stroke-width="2" stroke-linejoin="round"/><path d="M26 17 V27 M21 22 H31" stroke="#2a2a2a" stroke-width="2"/><rect x="20" y="16" width="12" height="12" fill="#8e8d8c" opacity="0"/></svg>
<div id="t44" style="position:absolute;left:672px;top:1215.70px;white-space:nowrap;font-family:'Liberation Sans', sans-serif;font-size:28px;line-height:28px;font-weight:400;color:#111111;transform:scaleX(0.9553);transform-origin:0 0;-webkit-text-stroke:0.5px #111111;">CE-5000 Desktop Computer</div>
<div id="t45" style="position:absolute;left:1244px;top:1215.60px;white-space:nowrap;font-family:'Liberation Sans', sans-serif;font-size:24px;line-height:24px;font-weight:400;color:#141414;transform:scaleX(0.8532);transform-origin:0 0;">CE5000</div>
<div id="t46" style="position:absolute;left:1491.6px;top:1215.60px;white-space:nowrap;font-family:'Liberation Sans', sans-serif;font-size:24px;line-height:24px;font-weight:400;color:#141414;transform:scaleX(0.8700);transform-origin:0 0;">Com</div>
<div style="position:absolute;left:550px;top:1273px;width:2271px;height:90px;background:#999999;"></div>
<div style="position:absolute;left:550px;top:1362px;width:2271px;height:2px;background:#939393;"></div>
<div style="position:absolute;left:565px;top:1290.5px;width:9px;height:55px;border-radius:4.5px;background:#8b8b8b"></div>
<div id="t47" style="position:absolute;left:672px;top:1301.70px;white-space:nowrap;font-family:'Liberation Sans', sans-serif;font-size:28px;line-height:28px;font-weight:400;color:#111111;transform:scaleX(0.9428);transform-origin:0 0;-webkit-text-stroke:0.5px #111111;">CE-5100 Desktop Computer</div>
<div id="t48" style="position:absolute;left:1244px;top:1301.60px;white-space:nowrap;font-family:'Liberation Sans', sans-serif;font-size:24px;line-height:24px;font-weight:400;color:#141414;transform:scaleX(0.8532);transform-origin:0 0;">CE5100</div>
<div id="t49" style="position:absolute;left:1491.6px;top:1301.60px;white-space:nowrap;font-family:'Liberation Sans', sans-serif;font-size:24px;line-height:24px;font-weight:400;color:#141414;transform:scaleX(0.8700);transform-origin:0 0;">Com</div>
<div style="position:absolute;left:550px;top:1363px;width:2271px;height:84px;background:#8e8d8c;"></div>
<div style="position:absolute;left:550px;top:1446px;width:2271px;height:2px;background:#9c9c9c;"></div>
<div style="position:absolute;left:565px;top:1380.5px;width:9px;height:49px;border-radius:4.5px;background:#7c7c7c"></div>
<svg style="position:absolute;left:605px;top:1388px;" width="34" height="34" viewBox="0 0 34 34"><circle cx="17" cy="17" r="16" fill="#2b4d04" stroke="#a0a0a0" stroke-width="0.8"/><path d="M9.5 17.5 L14.5 22.5 L24.5 12" fill="none" stroke="#b4b4b4" stroke-width="3.4" stroke-linecap="round" stroke-linejoin="round"/></svg>
<div style="position:absolute;left:1110.0px;top:1400px;width:4px;height:4px;background:#2a2a2a;border-radius:2px"></div>
<div style="position:absolute;left:1121.5px;top:1400px;width:4px;height:4px;background:#2a2a2a;border-radius:2px"></div>
<div style="position:absolute;left:1133.0px;top:1400px;width:4px;height:4px;background:#2a2a2a;border-radius:2px"></div>
<svg style="position:absolute;left:1169px;top:1386px;" width="35" height="32" viewBox="0 0 35 32"><path d="M2.5 2.5 H31 V19.5 H15 L8 26.5 V19.5 H2.5 Z" fill="none" stroke="#2a2a2a" stroke-width="2" stroke-linejoin="round"/><path d="M26 17 V27 M21 22 H31" stroke="#2a2a2a" stroke-width="2"/><rect x="20" y="16" width="12" height="12" fill="#8e8d8c" opacity="0"/></svg>
<div id="t50" style="position:absolute;left:672px;top:1390.20px;white-space:nowrap;font-family:'Liberation Sans', sans-serif;font-size:28px;line-height:28px;font-weight:400;color:#111111;transform:scaleX(0.9553);transform-origin:0 0;-webkit-text-stroke:0.5px #111111;">CE-6000 Desktop Computer</div>
<div id="t51" style="position:absolute;left:1244px;top:1390.10px;white-space:nowrap;font-family:'Liberation Sans', sans-serif;font-size:24px;line-height:24px;font-weight:400;color:#141414;transform:scaleX(0.8532);transform-origin:0 0;">CE6000</div>
<div id="t52" style="position:absolute;left:1491.6px;top:1390.10px;white-space:nowrap;font-family:'Liberation Sans', sans-serif;font-size:24px;line-height:24px;font-weight:400;color:#141414;transform:scaleX(0.8700);transform-origin:0 0;">Com</div>
<div style="position:absolute;left:550px;top:1447px;width:2271px;height:89px;background:#999999;"></div>
<div style="position:absolute;left:550px;top:1535px;width:2271px;height:2px;background:#939393;"></div>
<div style="position:absolute;left:565px;top:1464.5px;width:9px;height:54px;border-radius:4.5px;background:#8b8b8b"></div>
<div id="t53" style="position:absolute;left:672px;top:1479.20px;white-space:nowrap;font-family:'Liberation Sans', sans-serif;font-size:28px;line-height:28px;font-weight:400;color:#111111;transform:scaleX(0.9671);transform-origin:0 0;-webkit-text-stroke:0.5px #111111;">LT-3000 Laptop</div>
<div id="t54" style="position:absolute;left:1244px;top:1479.10px;white-space:nowrap;font-family:'Liberation Sans', sans-serif;font-size:24px;line-height:24px;font-weight:400;color:#141414;transform:scaleX(0.8791);transform-origin:0 0;">LT3000</div>
<div id="t55" style="position:absolute;left:1491.6px;top:1479.10px;white-space:nowrap;font-family:'Liberation Sans', sans-serif;font-size:24px;line-height:24px;font-weight:400;color:#141414;transform:scaleX(0.8700);transform-origin:0 0;">Com</div>
<div style="position:absolute;left:550px;top:1536px;width:2271px;height:89px;background:#999999;"></div>
<div style="position:absolute;left:550px;top:1624px;width:2271px;height:2px;background:#939393;"></div>
<div style="position:absolute;left:565px;top:1553.5px;width:9px;height:54px;border-radius:4.5px;background:#8b8b8b"></div>
<div id="t56" style="position:absolute;left:672px;top:1567.60px;white-space:nowrap;font-family:'Liberation Sans', sans-serif;font-size:28px;line-height:28px;font-weight:400;color:#111111;transform:scaleX(0.9682);transform-origin:0 0;-webkit-text-stroke:0.5px #111111;">LT-3000b Laptop</div>
<div id="t57" style="position:absolute;left:1244px;top:1567.50px;white-space:nowrap;font-family:'Liberation Sans', sans-serif;font-size:24px;line-height:24px;font-weight:400;color:#141414;transform:scaleX(0.8928);transform-origin:0 0;">LT3000b</div>
<div id="t58" style="position:absolute;left:1491.6px;top:1567.50px;white-space:nowrap;font-family:'Liberation Sans', sans-serif;font-size:24px;line-height:24px;font-weight:400;color:#141414;transform:scaleX(0.8700);transform-origin:0 0;">Com</div>
<div style="position:absolute;left:550px;top:1625px;width:2271px;height:88px;background:#999999;"></div>
<div style="position:absolute;left:550px;top:1712px;width:2271px;height:2px;background:#939393;"></div>
<div style="position:absolute;left:565px;top:1642.5px;width:9px;height:53px;border-radius:4.5px;background:#8b8b8b"></div>
<div id="t59" style="position:absolute;left:672px;top:1654.40px;white-space:nowrap;font-family:'Liberation Sans', sans-serif;font-size:28px;line-height:28px;font-weight:400;color:#111111;transform:scaleX(0.9660);transform-origin:0 0;-webkit-text-stroke:0.5px #111111;">LT-3000r Laptop</div>
<div id="t60" style="position:absolute;left:1244px;top:1654.30px;white-space:nowrap;font-family:'Liberation Sans', sans-serif;font-size:24px;line-height:24px;font-weight:400;color:#141414;transform:scaleX(0.8903);transform-origin:0 0;">LT3000r</div>
<div id="t61" style="position:absolute;left:1491.6px;top:1654.30px;white-space:nowrap;font-family:'Liberation Sans', sans-serif;font-size:24px;line-height:24px;font-weight:400;color:#141414;transform:scaleX(0.8700);transform-origin:0 0;">Com</div>
<div style="position:absolute;left:550px;top:1713px;width:2271px;height:86px;background:#999999;"></div>
<div style="position:absolute;left:550px;top:1798px;width:2271px;height:2px;background:#939393;"></div>
<div style="position:absolute;left:565px;top:1730.5px;width:9px;height:51px;border-radius:4.5px;background:#8b8b8b"></div>
<div id="t62" style="position:absolute;left:672px;top:1741.20px;white-space:nowrap;font-family:'Liberation Sans', sans-serif;font-size:28px;line-height:28px;font-weight:400;color:#111111;transform:scaleX(0.9604);transform-origin:0 0;-webkit-text-stroke:0.5px #111111;">T200b Tablet</div>
<div id="t63" style="position:absolute;left:1244px;top:1741.10px;white-space:nowrap;font-family:'Liberation Sans', sans-serif;font-size:24px;line-height:24px;font-weight:400;color:#141414;transform:scaleX(0.9109);transform-origin:0 0;">T200b</div>
<div id="t64" style="position:absolute;left:1491.6px;top:1741.10px;white-space:nowrap;font-family:'Liberation Sans', sans-serif;font-size:24px;line-height:24px;font-weight:400;color:#141414;transform:scaleX(0.8700);transform-origin:0 0;">Com</div>
<div style="position:absolute;left:550px;top:1799px;width:2271px;height:88px;background:#999999;"></div>
<div style="position:absolute;left:550px;top:1886px;width:2271px;height:2px;background:#939393;"></div>
<div style="position:absolute;left:565px;top:1816.5px;width:9px;height:53px;border-radius:4.5px;background:#8b8b8b"></div>
<div id="t65" style="position:absolute;left:672px;top:1829.20px;white-space:nowrap;font-family:'Liberation Sans', sans-serif;font-size:28px;line-height:28px;font-weight:400;color:#111111;transform:scaleX(0.9601);transform-origin:0 0;-webkit-text-stroke:0.5px #111111;">T200w Tablet</div>
<div id="t66" style="position:absolute;left:1244px;top:1829.10px;white-space:nowrap;font-family:'Liberation Sans', sans-serif;font-size:24px;line-height:24px;font-weight:400;color:#141414;transform:scaleX(0.9064);transform-origin:0 0;">T200w</div>
<div id="t67" style="position:absolute;left:1491.6px;top:1829.10px;white-space:nowrap;font-family:'Liberation Sans', sans-serif;font-size:24px;line-height:24px;font-weight:400;color:#141414;transform:scaleX(0.9490);transform-origin:0 0;">Computers &amp; Tablets</div>
<div style="position:absolute;left:550px;top:1887px;width:2271px;height:112px;background:#999999;"></div>
<div style="position:absolute;left:550px;top:1998px;width:2271px;height:2px;background:#939393;"></div>
<div style="position:absolute;left:565px;top:1904.5px;width:9px;height:77px;border-radius:4.5px;background:#8b8b8b"></div>
<div id="t68" style="position:absolute;left:672px;top:1917.70px;white-space:nowrap;font-family:'Liberation Sans', sans-serif;font-size:28px;line-height:28px;font-weight:400;color:#111111;transform:scaleX(0.9543);transform-origin:0 0;-webkit-text-stroke:0.5px #111111;">Wireless Shutter Remote</div>
<div id="t69" style="position:absolute;left:1244px;top:1917.60px;white-space:nowrap;font-family:'Liberation Sans', sans-serif;font-size:24px;line-height:24px;font-weight:400;color:#141414;transform:scaleX(0.8493);transform-origin:0 0;">SR10</div>
<div id="t70" style="position:absolute;left:1491.6px;top:1917.60px;white-space:nowrap;font-family:'Liberation Sans', sans-serif;font-size:24px;line-height:24px;font-weight:400;color:#141414;transform:scaleX(0.9363);transform-origin:0 0;">Cameras &amp;</div>
<div id="t71" style="position:absolute;left:1491.6px;top:1947.60px;white-space:nowrap;font-family:'Liberation Sans', sans-serif;font-size:24px;line-height:24px;font-weight:400;color:#141414;transform:scaleX(0.9212);transform-origin:0 0;">Camcorders</div>
<div style="position:absolute;left:549px;top:648px;width:1.2px;height:1372px;background:#878787;"></div>
<div id="t72" style="position:absolute;left:1739.8px;top:1829.60px;white-space:nowrap;font-family:'Liberation Sans', sans-serif;font-size:24px;line-height:24px;font-weight:400;color:#141414;transform:scaleX(0.9073);transform-origin:0 0;">Tablets</div>
<div id="t73" style="position:absolute;left:1987.3px;top:1829.60px;white-space:nowrap;font-family:'Liberation Sans', sans-serif;font-size:24px;line-height:24px;font-weight:400;color:#141414;transform:scaleX(0.9567);transform-origin:0 0;">White</div>
<div id="t74" style="position:absolute;left:1739.8px;top:1917.00px;white-space:nowrap;font-family:'Liberation Sans', sans-serif;font-size:24px;line-height:24px;font-weight:400;color:#141414;transform:scaleX(0.8942);transform-origin:0 0;">Camera accessories</div>
<div id="t75" style="position:absolute;left:1987.3px;top:1917.00px;white-space:nowrap;font-family:'Liberation Sans', sans-serif;font-size:24px;line-height:24px;font-weight:400;color:#141414;transform:scaleX(0.8860);transform-origin:0 0;">Black</div>
<div style="position:absolute;left:1532px;top:0px;width:1224px;height:1835.5px;background:#707070;"></div>
<div style="position:absolute;left:1533px;top:0px;width:1222px;height:1834px;background:#ffffff;"></div>
<div style="position:absolute;left:1533px;top:0px;width:1222px;height:69.5px;background:#008000;"></div>
<div style="position:absolute;left:1533px;top:68px;width:40px;height:1.5px;background:#006400;"></div>
<div id="t76" style="position:absolute;left:1554px;top:20.60px;white-space:nowrap;font-family:'Liberation Sans', sans-serif;font-size:28px;line-height:28px;font-weight:400;color:#ffffff;transform:scaleX(0.8662);transform-origin:0 0;">Product List 2025-07-13 12:55 27</div>
<svg style="position:absolute;left:2706px;top:26px;" width="19" height="18" viewBox="0 0 19 18"><path d="M3 3 L16 15.5 M16 3 L3 15.5" stroke="#fff" stroke-width="2.6"/></svg>
<div style="position:absolute;left:1573.5px;top:70.5px;width:1110.5px;height:1628.5px;background:#d8d8d8;"></div>
<div style="position:absolute;left:1573.5px;top:70.5px;width:2.5px;height:1628.5px;background:#a4a4a4;"></div>
<div style="position:absolute;left:1573.5px;top:70.5px;width:1110.5px;height:2.5px;background:#cbbccb;"></div>
<div style="position:absolute;left:1576px;top:73px;width:1106px;height:1624px;background:#f9f9f9;"></div>
<div style="position:absolute;left:1576px;top:73px;width:1107px;height:142px;background:#3c3c3c;"></div>
<div style="position:absolute;left:2681px;top:73px;width:2px;height:142px;background:#111;"></div>
<div style="position:absolute;left:1576px;top:73px;width:2px;height:142px;background:#222;"></div>
<div style="position:absolute;left:1576px;top:73px;width:1106px;height:1.5px;background:#222;"></div>
<div style="position:absolute;left:1576px;top:215px;width:1068.5px;height:1401px;background:#ffffff;"></div>
<div style="position:absolute;left:1576px;top:215px;width:1068.5px;height:5px;background:#1a1a1a;"></div>
<div style="position:absolute;left:1576.5px;top:215px;width:6.5px;height:1401px;background:#1e1e1e;"></div>
<div style="position:absolute;left:1617px;top:119px;width:59.4px;height:50.6px;background:#222222;"></div>
<svg style="position:absolute;left:1630px;top:125px;" width="120" height="40" viewBox="0 0 120 40"><g fill="none" stroke="#fff" stroke-width="3.6" stroke-linecap="butt"><path d="M19 33 V9.5 M19.5 9.2 L10.5 15.5"/><path d="M69.2 10.5 L58 36.5"/><path d="M102.5 33 V9.5 M103 9.2 L94 15.5"/></g></svg>
<div style="position:absolute;left:1799px;top:119px;width:2px;height:51px;background:#8f8f8f;"></div>
<div style="position:absolute;left:1985px;top:119px;width:2px;height:51px;background:#8f8f8f;"></div>
<div style="position:absolute;left:2099px;top:119px;width:2px;height:51px;background:#8f8f8f;"></div>
<div style="position:absolute;left:2213.6px;top:119px;width:2px;height:51px;background:#8f8f8f;"></div>
<div style="position:absolute;left:1839.5px;top:143px;width:27px;height:3px;background:#ffffff;"></div>
<div style="position:absolute;left:1921px;top:143px;width:26px;height:3px;background:#ffffff;"></div>
<div style="position:absolute;left:1932.5px;top:131px;width:3px;height:27px;background:#ffffff;"></div>
<svg style="position:absolute;left:1995px;top:115px;" width="60" height="57" viewBox="0 0 60 57"><g fill="none" stroke="#ffffff" stroke-width="3.6" stroke-linejoin="miter"><path d="M13.1 32.6 L22.1 23.6 L31.1 32.6 L22.1 41.6 Z"/><path d="M33.5 17.1 A15.5 15.5 0 1 1 26.9 46.2"/><path d="M36.5 9.1 L28.5 16.8 L36.1 24"/></g></svg>
<svg style="position:absolute;left:2130px;top:115px;" width="50" height="50" viewBox="0 0 50 50"><path d="M11 16.5 Q15 12 17.5 14 Q20 16 17 23 L13 32 Q11 38 15.5 38.5 Q19 38.5 24 31 Q28 25 32 24 Q38 23.5 37.5 31 Q36 39 33 42 Q30 45 27.5 42 Q26 38 30 34.5 Q34 32 45.5 32" fill="none" stroke="#ffffff" stroke-width="3.4" stroke-linecap="round" stroke-linejoin="round"/></svg>
<svg style="position:absolute;left:2254px;top:129px;" width="35" height="33" viewBox="0 0 35 33"><g fill="none" stroke="#8a8a8a" stroke-width="2.8"><path d="M10 3 L3.5 9.5 L10 16"/><path d="M3.5 9.5 H21 a8.5 8.5 0 0 1 0 17 H7"/></g></svg>
<svg style="position:absolute;left:2335px;top:129px;" width="35" height="33" viewBox="0 0 35 33"><g fill="none" stroke="#8a8a8a" stroke-width="2.8"><path d="M25 3 L31.5 9.5 L25 16"/><path d="M31.5 9.5 H14 a8.5 8.5 0 0 0 0 17 H28"/></g></svg>
<svg style="position:absolute;left:2467px;top:123px;" width="36" height="40" viewBox="0 0 36 40"><g fill="none" stroke="#ffffff" stroke-width="3.2"><path d="M18 3 V26 M8 16 L18 26 L28 16"/><path d="M4 27 V31.5 a4 4 0 0 0 4 4 H28 a4 4 0 0 0 4 -4 V27"/></g></svg>
<svg style="position:absolute;left:2554px;top:123px;" width="44" height="43" viewBox="0 0 44 43"><g fill="none" stroke="#ffffff" stroke-width="3.2" stroke-linejoin="miter"><rect x="11" y="3" width="21" height="10"/><path d="M11 31.5 H4 V17 a3 3 0 0 1 3 -3 H36 a3 3 0 0 1 3 3 V31.5 H32"/><rect x="11" y="25.5" width="21" height="13.5"/></g><circle cx="33.5" cy="19.5" r="1.8" fill="#ffffff"/></svg>
<div style="position:absolute;left:2663.3px;top:128.4px;width:8.4px;height:8.4px;border-radius:50%;background:#fff"></div>
<div style="position:absolute;left:2663.3px;top:140.10000000000002px;width:8.4px;height:8.4px;border-radius:50%;background:#fff"></div>
<div style="position:absolute;left:2663.3px;top:151.8px;width:8.4px;height:8.4px;border-radius:50%;background:#fff"></div>
<div id="t77" style="position:absolute;left:2018.5px;top:256.00px;white-space:nowrap;font-family:'Liberation Sans', sans-serif;font-size:22px;line-height:22px;font-weight:400;color:#000;transform:scaleX(0.9932);transform-origin:0 0;">7/13/2025 12:55 PM</div>
<div style="position:absolute;left:1653px;top:322.5px;width:921.5px;height:3.6px;background:#000;"></div>
<div style="position:absolute;left:1653px;top:358.40000000000003px;width:921.5px;height:2px;background:#b9b9b9;"></div>
<div style="position:absolute;left:1653px;top:392.3px;width:921.5px;height:2px;background:#b9b9b9;"></div>
<div style="position:absolute;left:1653px;top:426.6px;width:921.5px;height:2px;background:#b9b9b9;"></div>
<div style="position:absolute;left:1653px;top:460.8px;width:921.5px;height:2px;background:#b9b9b9;"></div>
<div style="position:absolute;left:1653px;top:494.8px;width:921.5px;height:2px;background:#b9b9b9;"></div>
<div id="t78" style="position:absolute;left:1653px;top:331.40px;white-space:nowrap;font-family:'Liberation Sans', sans-serif;font-size:22px;line-height:22px;font-weight:400;color:#000;transform:scaleX(1.0319);transform-origin:0 0;">Title</div>
<div id="t79" style="position:absolute;left:1808px;top:331.40px;white-space:nowrap;font-family:'Liberation Sans', sans-serif;font-size:22px;line-height:22px;font-weight:400;color:#000;transform:scaleX(0.9661);transform-origin:0 0;-webkit-text-stroke:0.65px #000;">CE-5000 Desktop Computer</div>
<div id="t80" style="position:absolute;left:1653px;top:365.50px;white-space:nowrap;font-family:'Liberation Sans', sans-serif;font-size:22px;line-height:22px;font-weight:400;color:#000;transform:scaleX(0.9785);transform-origin:0 0;">Code Name</div>
<div id="t81" style="position:absolute;left:1808px;top:365.50px;white-space:nowrap;font-family:'Liberation Sans', sans-serif;font-size:22px;line-height:22px;font-weight:400;color:#000;transform:scaleX(0.9750);transform-origin:0 0;">CE5000</div>
<div id="t82" style="position:absolute;left:1653px;top:399.60px;white-space:nowrap;font-family:'Liberation Sans', sans-serif;font-size:22px;line-height:22px;font-weight:400;color:#000;transform:scaleX(0.9750);transform-origin:0 0;">Product Line</div>
<div id="t83" style="position:absolute;left:1808px;top:399.60px;white-space:nowrap;font-family:'Liberation Sans', sans-serif;font-size:22px;line-height:22px;font-weight:400;color:#000;transform:scaleX(0.9750);transform-origin:0 0;">Computers &amp; Tablets</div>
<div id="t84" style="position:absolute;left:1653px;top:433.70px;white-space:nowrap;font-family:'Liberation Sans', sans-serif;font-size:22px;line-height:22px;font-weight:400;color:#000;transform:scaleX(0.9750);transform-origin:0 0;">Product Type</div>
<div id="t85" style="position:absolute;left:1808px;top:433.70px;white-space:nowrap;font-family:'Liberation Sans', sans-serif;font-size:22px;line-height:22px;font-weight:400;color:#000;transform:scaleX(0.9750);transform-origin:0 0;">Desktop computers</div>
<div id="t86" style="position:absolute;left:1653px;top:467.80px;white-space:nowrap;font-family:'Liberation Sans', sans-serif;font-size:22px;line-height:22px;font-weight:400;color:#000;transform:scaleX(0.9750);transform-origin:0 0;">Color</div>
<div id="t87" style="position:absolute;left:1808px;top:467.80px;white-space:nowrap;font-family:'Liberation Sans', sans-serif;font-size:22px;line-height:22px;font-weight:400;color:#000;transform:scaleX(0.9750);transform-origin:0 0;">Silver</div>
<div id="t88" style="position:absolute;left:1653px;top:501.90px;white-space:nowrap;font-family:'Liberation Sans', sans-serif;font-size:22px;line-height:22px;font-weight:400;color:#000;transform:scaleX(0.9750);transform-origin:0 0;">Notes</div>
<div style="position:absolute;left:1653px;top:560.7px;width:921.5px;height:3.6px;background:#000;"></div>
<div style="position:absolute;left:1653px;top:596.6px;width:921.5px;height:2px;background:#b9b9b9;"></div>
<div style="position:absolute;left:1653px;top:630.5px;width:921.5px;height:2px;background:#b9b9b9;"></div>
<div style="position:absolute;left:1653px;top:664.8px;width:921.5px;height:2px;background:#b9b9b9;"></div>
<div style="position:absolute;left:1653px;top:699.0px;width:921.5px;height:2px;background:#b9b9b9;"></div>
<div style="position:absolute;left:1653px;top:733.0px;width:921.5px;height:2px;background:#b9b9b9;"></div>
<div id="t89" style="position:absolute;left:1653px;top:569.60px;white-space:nowrap;font-family:'Liberation Sans', sans-serif;font-size:22px;line-height:22px;font-weight:400;color:#000;transform:scaleX(1.0319);transform-origin:0 0;">Title</div>
<div id="t90" style="position:absolute;left:1808px;top:569.60px;white-space:nowrap;font-family:'Liberation Sans', sans-serif;font-size:22px;line-height:22px;font-weight:400;color:#000;transform:scaleX(0.9661);transform-origin:0 0;-webkit-text-stroke:0.65px #000;">CE-6000 Desktop Computer</div>
<div id="t91" style="position:absolute;left:1653px;top:603.70px;white-space:nowrap;font-family:'Liberation Sans', sans-serif;font-size:22px;line-height:22px;font-weight:400;color:#000;transform:scaleX(0.9785);transform-origin:0 0;">Code Name</div>
<div id="t92" style="position:absolute;left:1808px;top:603.70px;white-space:nowrap;font-family:'Liberation Sans', sans-serif;font-size:22px;line-height:22px;font-weight:400;color:#000;transform:scaleX(0.9750);transform-origin:0 0;">CE6000</div>
<div id="t93" style="position:absolute;left:1653px;top:637.80px;white-space:nowrap;font-family:'Liberation Sans', sans-serif;font-size:22px;line-height:22px;font-weight:400;color:#000;transform:scaleX(0.9750);transform-origin:0 0;">Product Line</div>
<div id="t94" style="position:absolute;left:1808px;top:637.80px;white-space:nowrap;font-family:'Liberation Sans', sans-serif;font-size:22px;line-height:22px;font-weight:400;color:#000;transform:scaleX(0.9750);transform-origin:0 0;">Computers &amp; Tablets</div>
<div id="t95" style="position:absolute;left:1653px;top:671.90px;white-space:nowrap;font-family:'Liberation Sans', sans-serif;font-size:22px;line-height:22px;font-weight:400;color:#000;transform:scaleX(0.9750);transform-origin:0 0;">Product Type</div>
<div id="t96" style="position:absolute;left:1808px;top:671.90px;white-space:nowrap;font-family:'Liberation Sans', sans-serif;font-size:22px;line-height:22px;font-weight:400;color:#000;transform:scaleX(0.9750);transform-origin:0 0;">Desktop computers</div>
<div id="t97" style="position:absolute;left:1653px;top:706.00px;white-space:nowrap;font-family:'Liberation Sans', sans-serif;font-size:22px;line-height:22px;font-weight:400;color:#000;transform:scaleX(0.9750);transform-origin:0 0;">Color</div>
<div id="t98" style="position:absolute;left:1808px;top:706.00px;white-space:nowrap;font-family:'Liberation Sans', sans-serif;font-size:22px;line-height:22px;font-weight:400;color:#000;transform:scaleX(0.9750);transform-origin:0 0;">Black</div>
<div id="t99" style="position:absolute;left:1653px;top:740.10px;white-space:nowrap;font-family:'Liberation Sans', sans-serif;font-size:22px;line-height:22px;font-weight:400;color:#000;transform:scaleX(0.9750);transform-origin:0 0;">Notes</div>
<div style="position:absolute;left:1653px;top:798.9000000000001px;width:921.5px;height:3.6px;background:#000;"></div>
<div style="position:absolute;left:1653px;top:834.8000000000001px;width:921.5px;height:2px;background:#b9b9b9;"></div>
<div style="position:absolute;left:1653px;top:868.7px;width:921.5px;height:2px;background:#b9b9b9;"></div>
<div style="position:absolute;left:1653px;top:903.0px;width:921.5px;height:2px;background:#b9b9b9;"></div>
<div style="position:absolute;left:1653px;top:937.2px;width:921.5px;height:2px;background:#b9b9b9;"></div>
<div style="position:absolute;left:1653px;top:971.2px;width:921.5px;height:2px;background:#b9b9b9;"></div>
<div id="t100" style="position:absolute;left:1653px;top:807.80px;white-space:nowrap;font-family:'Liberation Sans', sans-serif;font-size:22px;line-height:22px;font-weight:400;color:#000;transform:scaleX(1.0319);transform-origin:0 0;">Title</div>
<div id="t101" style="position:absolute;left:1808px;top:807.80px;white-space:nowrap;font-family:'Liberation Sans', sans-serif;font-size:22px;line-height:22px;font-weight:400;color:#000;transform:scaleX(0.9512);transform-origin:0 0;-webkit-text-stroke:0.65px #000;">D-100</div>
<div id="t102" style="position:absolute;left:1653px;top:841.90px;white-space:nowrap;font-family:'Liberation Sans', sans-serif;font-size:22px;line-height:22px;font-weight:400;color:#000;transform:scaleX(0.9785);transform-origin:0 0;">Code Name</div>
<div id="t103" style="position:absolute;left:1808px;top:841.90px;white-space:nowrap;font-family:'Liberation Sans', sans-serif;font-size:22px;line-height:22px;font-weight:400;color:#000;transform:scaleX(0.9750);transform-origin:0 0;">D1b</div>
<div id="t104" style="position:absolute;left:1653px;top:876.00px;white-space:nowrap;font-family:'Liberation Sans', sans-serif;font-size:22px;line-height:22px;font-weight:400;color:#000;transform:scaleX(0.9750);transform-origin:0 0;">Product Line</div>
<div id="t105" style="position:absolute;left:1808px;top:876.00px;white-space:nowrap;font-family:'Liberation Sans', sans-serif;font-size:22px;line-height:22px;font-weight:400;color:#000;transform:scaleX(0.9750);transform-origin:0 0;">Cameras &amp; Camcorders</div>
<div id="t106" style="position:absolute;left:1653px;top:910.10px;white-space:nowrap;font-family:'Liberation Sans', sans-serif;font-size:22px;line-height:22px;font-weight:400;color:#000;transform:scaleX(0.9750);transform-origin:0 0;">Product Type</div>
<div id="t107" style="position:absolute;left:1808px;top:910.10px;white-space:nowrap;font-family:'Liberation Sans', sans-serif;font-size:22px;line-height:22px;font-weight:400;color:#000;transform:scaleX(0.9750);transform-origin:0 0;">Digital cameras</div>
<div id="t108" style="position:absolute;left:1653px;top:944.20px;white-space:nowrap;font-family:'Liberation Sans', sans-serif;font-size:22px;line-height:22px;font-weight:400;color:#000;transform:scaleX(0.9750);transform-origin:0 0;">Color</div>
<div id="t109" style="position:absolute;left:1808px;top:944.20px;white-space:nowrap;font-family:'Liberation Sans', sans-serif;font-size:22px;line-height:22px;font-weight:400;color:#000;transform:scaleX(0.9750);transform-origin:0 0;">Black</div>
<div id="t110" style="position:absolute;left:1653px;top:978.30px;white-space:nowrap;font-family:'Liberation Sans', sans-serif;font-size:22px;line-height:22px;font-weight:400;color:#000;transform:scaleX(0.9750);transform-origin:0 0;">Notes</div>
<div style="position:absolute;left:1653px;top:1037.1px;width:921.5px;height:3.6px;background:#000;"></div>
<div style="position:absolute;left:1653px;top:1072.9999999999998px;width:921.5px;height:2px;background:#b9b9b9;"></div>
<div style="position:absolute;left:1653px;top:1106.8999999999999px;width:921.5px;height:2px;background:#b9b9b9;"></div>
<div style="position:absolute;left:1653px;top:1141.1999999999998px;width:921.5px;height:2px;background:#b9b9b9;"></div>
<div style="position:absolute;left:1653px;top:1175.3999999999999px;width:921.5px;height:2px;background:#b9b9b9;"></div>
<div style="position:absolute;left:1653px;top:1209.3999999999999px;width:921.5px;height:2px;background:#b9b9b9;"></div>
<div id="t111" style="position:absolute;left:1653px;top:1046.00px;white-space:nowrap;font-family:'Liberation Sans', sans-serif;font-size:22px;line-height:22px;font-weight:400;color:#000;transform:scaleX(1.0319);transform-origin:0 0;">Title</div>
<div id="t112" style="position:absolute;left:1808px;top:1046.00px;white-space:nowrap;font-family:'Liberation Sans', sans-serif;font-size:22px;line-height:22px;font-weight:400;color:#000;transform:scaleX(0.9632);transform-origin:0 0;-webkit-text-stroke:0.65px #000;">D-200b</div>
<div id="t113" style="position:absolute;left:1653px;top:1080.10px;white-space:nowrap;font-family:'Liberation Sans', sans-serif;font-size:22px;line-height:22px;font-weight:400;color:#000;transform:scaleX(0.9785);transform-origin:0 0;">Code Name</div>
<div id="t114" style="position:absolute;left:1808px;top:1080.10px;white-space:nowrap;font-family:'Liberation Sans', sans-serif;font-size:22px;line-height:22px;font-weight:400;color:#000;transform:scaleX(0.9750);transform-origin:0 0;">D2b</div>
<div id="t115" style="position:absolute;left:1653px;top:1114.20px;white-space:nowrap;font-family:'Liberation Sans', sans-serif;font-size:22px;line-height:22px;font-weight:400;color:#000;transform:scaleX(0.9750);transform-origin:0 0;">Product Line</div>
<div id="t116" style="position:absolute;left:1808px;top:1114.20px;white-space:nowrap;font-family:'Liberation Sans', sans-serif;font-size:22px;line-height:22px;font-weight:400;color:#000;transform:scaleX(0.9750);transform-origin:0 0;">Cameras &amp; Camcorders</div>
<div id="t117" style="position:absolute;left:1653px;top:1148.30px;white-space:nowrap;font-family:'Liberation Sans', sans-serif;font-size:22px;line-height:22px;font-weight:400;color:#000;transform:scaleX(0.9750);transform-origin:0 0;">Product Type</div>
<div id="t118" style="position:absolute;left:1808px;top:1148.30px;white-space:nowrap;font-family:'Liberation Sans', sans-serif;font-size:22px;line-height:22px;font-weight:400;color:#000;transform:scaleX(0.9750);transform-origin:0 0;">Digital cameras</div>
<div id="t119" style="position:absolute;left:1653px;top:1182.40px;white-space:nowrap;font-family:'Liberation Sans', sans-serif;font-size:22px;line-height:22px;font-weight:400;color:#000;transform:scaleX(0.9750);transform-origin:0 0;">Color</div>
<div id="t120" style="position:absolute;left:1808px;top:1182.40px;white-space:nowrap;font-family:'Liberation Sans', sans-serif;font-size:22px;line-height:22px;font-weight:400;color:#000;transform:scaleX(0.9750);transform-origin:0 0;">Black</div>
<div id="t121" style="position:absolute;left:1653px;top:1216.50px;white-space:nowrap;font-family:'Liberation Sans', sans-serif;font-size:22px;line-height:22px;font-weight:400;color:#000;transform:scaleX(0.9750);transform-origin:0 0;">Notes</div>
<div style="position:absolute;left:1653px;top:1275.3px;width:921.5px;height:3.6px;background:#000;"></div>
<div style="position:absolute;left:1653px;top:1311.1999999999998px;width:921.5px;height:2px;background:#b9b9b9;"></div>
<div style="position:absolute;left:1653px;top:1345.1px;width:921.5px;height:2px;background:#b9b9b9;"></div>
<div style="position:absolute;left:1653px;top:1379.3999999999999px;width:921.5px;height:2px;background:#b9b9b9;"></div>
<div style="position:absolute;left:1653px;top:1413.6px;width:921.5px;height:2px;background:#b9b9b9;"></div>
<div style="position:absolute;left:1653px;top:1447.6px;width:921.5px;height:2px;background:#b9b9b9;"></div>
<div id="t122" style="position:absolute;left:1653px;top:1284.20px;white-space:nowrap;font-family:'Liberation Sans', sans-serif;font-size:22px;line-height:22px;font-weight:400;color:#000;transform:scaleX(1.0319);transform-origin:0 0;">Title</div>
<div id="t123" style="position:absolute;left:1808px;top:1284.20px;white-space:nowrap;font-family:'Liberation Sans', sans-serif;font-size:22px;line-height:22px;font-weight:400;color:#000;transform:scaleX(0.9370);transform-origin:0 0;-webkit-text-stroke:0.65px #000;">DG-2000g SLR Camera</div>
<div id="t124" style="position:absolute;left:1653px;top:1318.30px;white-space:nowrap;font-family:'Liberation Sans', sans-serif;font-size:22px;line-height:22px;font-weight:400;color:#000;transform:scaleX(0.9785);transform-origin:0 0;">Code Name</div>
<div id="t125" style="position:absolute;left:1808px;top:1318.30px;white-space:nowrap;font-family:'Liberation Sans', sans-serif;font-size:22px;line-height:22px;font-weight:400;color:#000;transform:scaleX(0.9750);transform-origin:0 0;">DG2g</div>
<div id="t126" style="position:absolute;left:1653px;top:1352.40px;white-space:nowrap;font-family:'Liberation Sans', sans-serif;font-size:22px;line-height:22px;font-weight:400;color:#000;transform:scaleX(0.9750);transform-origin:0 0;">Product Line</div>
<div id="t127" style="position:absolute;left:1808px;top:1352.40px;white-space:nowrap;font-family:'Liberation Sans', sans-serif;font-size:22px;line-height:22px;font-weight:400;color:#000;transform:scaleX(0.9750);transform-origin:0 0;">Cameras &amp; Camcorders</div>
<div id="t128" style="position:absolute;left:1653px;top:1386.50px;white-space:nowrap;font-family:'Liberation Sans', sans-serif;font-size:22px;line-height:22px;font-weight:400;color:#000;transform:scaleX(0.9750);transform-origin:0 0;">Product Type</div>
<div id="t129" style="position:absolute;left:1808px;top:1386.50px;white-space:nowrap;font-family:'Liberation Sans', sans-serif;font-size:22px;line-height:22px;font-weight:400;color:#000;transform:scaleX(0.9750);transform-origin:0 0;">SLR camera</div>
<div id="t130" style="position:absolute;left:1653px;top:1420.60px;white-space:nowrap;font-family:'Liberation Sans', sans-serif;font-size:22px;line-height:22px;font-weight:400;color:#000;transform:scaleX(0.9750);transform-origin:0 0;">Color</div>
<div id="t131" style="position:absolute;left:1808px;top:1420.60px;white-space:nowrap;font-family:'Liberation Sans', sans-serif;font-size:22px;line-height:22px;font-weight:400;color:#000;transform:scaleX(0.9750);transform-origin:0 0;">Green</div>
<div id="t132" style="position:absolute;left:1653px;top:1454.70px;white-space:nowrap;font-family:'Liberation Sans', sans-serif;font-size:22px;line-height:22px;font-weight:400;color:#000;transform:scaleX(0.9750);transform-origin:0 0;">Notes</div>
<svg style="position:absolute;left:2650px;top:225px;" width="28" height="22" viewBox="0 0 28 22"><path d="M13.5 3 L24 18 a1.5 1.5 0 0 1 -1.3 2 H4.3 a1.5 1.5 0 0 1 -1.3 -2 Z" fill="#8c8c8c" stroke="#8c8c8c" stroke-width="2" stroke-linejoin="round"/></svg>
<div style="position:absolute;left:2653px;top:262px;width:21px;height:1207px;border-radius:10.5px;background:#8c8c8c"></div>
<svg style="position:absolute;left:2650px;top:1586px;" width="28" height="22" viewBox="0 0 28 22"><path d="M13.5 19 L24 4 a1.5 1.5 0 0 0 -1.3 -2 H4.3 a1.5 1.5 0 0 0 -1.3 2 Z" fill="#8c8c8c" stroke="#8c8c8c" stroke-width="2" stroke-linejoin="round"/></svg>
<svg style="position:absolute;left:1585px;top:1623.4px;" width="22" height="26" viewBox="0 0 22 26"><path d="M3 12.5 L18 2 a1.5 1.5 0 0 1 2 1.3 V21.7 a1.5 1.5 0 0 1 -2 1.3 Z" fill="#8c8c8c" stroke="#8c8c8c" stroke-width="2" stroke-linejoin="round"/></svg>
<div style="position:absolute;left:1622.8px;top:1624.4px;width:966.5000000000002px;height:21.3px;border-radius:10.6px;background:#8c8c8c"></div>
<svg style="position:absolute;left:2613.5px;top:1623.4px;" width="22" height="26" viewBox="0 0 22 26"><path d="M19 12.5 L4 2 a1.5 1.5 0 0 0 -2 1.3 V21.7 a1.5 1.5 0 0 0 2 1.3 Z" fill="#8c8c8c" stroke="#8c8c8c" stroke-width="2" stroke-linejoin="round"/></svg>
<svg style="position:absolute;left:1585px;top:1662.3px;" width="22" height="26" viewBox="0 0 22 26"><path d="M3 12.5 L18 2 a1.5 1.5 0 0 1 2 1.3 V21.7 a1.5 1.5 0 0 1 -2 1.3 Z" fill="#8c8c8c" stroke="#8c8c8c" stroke-width="2" stroke-linejoin="round"/></svg>
<div style="position:absolute;left:1622.8px;top:1663.3px;width:992.2px;height:21.3px;border-radius:10.6px;background:#8c8c8c"></div>
<svg style="position:absolute;left:2652.4px;top:1662.3px;" width="22" height="26" viewBox="0 0 22 26"><path d="M19 12.5 L4 2 a1.5 1.5 0 0 0 -2 1.3 V21.7 a1.5 1.5 0 0 0 2 1.3 Z" fill="#8c8c8c" stroke="#8c8c8c" stroke-width="2" stroke-linejoin="round"/></svg>
<div style="position:absolute;left:1578.5px;top:1710.5px;width:55px;height:57px;box-sizing:border-box;border:2px solid #000;border-radius:9px;background:#efefef"></div>
<svg style="position:absolute;left:1592px;top:1722px;" width="30" height="34" viewBox="0 0 30 34"><defs><linearGradient id="ar" x1="0" x2="1"><stop offset="0" stop-color="#ff0010"/><stop offset="1" stop-color="#d02070"/></linearGradient></defs>
<rect x="2" y="29" width="26" height="5" fill="#b090d8"/>
<path d="M4.8 14.5 Q4.8 12.3 7 12.3 H10 L15 17.5 L20 12.3 H23 Q25 12.3 25 14.5 V28 H18 Q16.5 31 15 31 Q13.5 31 12 28 H4.8 Z" fill="#2f80d8"/>
<path d="M11.7 0 H18.3 V10.5 H21.5 L15 18.5 L8.5 10.5 H11.7 Z" fill="url(#ar)"/></svg>
<div style="position:absolute;left:1655px;top:1716px;width:176.5px;height:57px;box-sizing:border-box;border:2px solid #4f4f4f;border-radius:9px;background:#fff"></div>
<div id="t133" style="position:absolute;left:1664px;top:1730.35px;white-space:nowrap;font-family:'Liberation Sans', sans-serif;font-size:29px;line-height:29px;font-weight:400;color:#000;transform:scaleX(0.8647);transform-origin:0 0;">Invoices</div>
<svg style="position:absolute;left:1799px;top:1736px;" width="24" height="18" viewBox="0 0 24 18"><path d="M3 4 L12 13 L21 4" fill="none" stroke="#000" stroke-width="3.2"/></svg>
<div style="position:absolute;left:1851px;top:1710.5px;width:58px;height:57px;box-sizing:border-box;border:2px solid #000;border-radius:9px;background:#fff"></div>
<svg style="position:absolute;left:1862px;top:1724px;" width="36" height="35" viewBox="0 0 36 35"><path d="M2 3 a2 2 0 0 1 2 -2 H29 L34 6 V32 a2 2 0 0 1 -2 2 H4 a2 2 0 0 1 -2 -2 Z" fill="#4a4aa8"/>
<rect x="7" y="1" width="20" height="13" fill="#2a1a5a"/><rect x="12" y="1" width="9" height="12" fill="#eae0f8"/><rect x="20.5" y="2" width="3.5" height="10" fill="#2a1a5a"/>
<rect x="6" y="17" width="24" height="4" fill="#f01040"/><rect x="6" y="21" width="24" height="13" fill="#dcd0ec"/></svg>
<div style="position:absolute;left:2578px;top:1711px;width:105px;height:57px;box-sizing:border-box;border:2px solid #000;border-radius:9px;background:#efefef"></div>
<div id="t134" style="position:absolute;left:2591px;top:1727.85px;white-space:nowrap;font-family:'Liberation Sans', sans-serif;font-size:29px;line-height:29px;font-weight:400;color:#000;transform:scaleX(0.8640);transform-origin:0 0;">Cancel</div>
<div style="position:absolute;left:0px;top:0px;width:2821px;height:1px;background:#000;"></div>
<div style="position:absolute;left:0px;top:1px;width:2821px;height:2px;background:#ffffff;"></div>
<div style="position:absolute;left:0px;top:0px;width:1px;height:2020px;background:#000;"></div>
<div style="position:absolute;left:1px;top:0px;width:1.2px;height:2020px;background:#e8e8e8;"></div>
<svg style="position:absolute;left:0;top:0" width="2821" height="2020" viewBox="0 0 2821 2020"><polygon points="2831,-10 2813.20,0.40 2820.20,7.41 2813.20,14.42 2820.20,21.43 2813.20,28.44 2820.20,35.45 2813.20,42.46 2820.20,49.47 2813.20,56.48 2820.20,63.49 2813.20,70.50 2820.20,77.51 2813.20,84.52 2820.20,91.53 2813.20,98.54 2820.20,105.55 2813.20,112.56 2820.20,119.57 2813.20,126.58 2820.20,133.59 2813.20,140.60 2820.20,147.61 2813.20,154.62 2820.20,161.63 2813.20,168.64 2820.20,175.65 2813.20,182.66 2820.20,189.67 2813.20,196.68 2820.20,203.69 2813.20,210.70 2820.20,217.71 2813.20,224.72 2820.20,231.73 2813.20,238.74 2820.20,245.75 2813.20,252.76 2820.20,259.77 2813.20,266.78 2820.20,273.79 2813.20,280.80 2820.20,287.81 2813.20,294.82 2820.20,301.83 2813.20,308.84 2820.20,315.85 2813.20,322.86 2820.20,329.87 2813.20,336.88 2820.20,343.89 2813.20,350.90 2820.20,357.91 2813.20,364.92 2820.20,371.93 2813.20,378.94 2820.20,385.95 2813.20,392.96 2820.20,399.97 2813.20,406.98 2820.20,413.99 2813.20,421.00 2820.20,428.01 2813.20,435.02 2820.20,442.03 2813.20,449.04 2820.20,456.05 2813.20,463.06 2820.20,470.07 2813.20,477.08 2820.20,484.09 2813.20,491.10 2820.20,498.11 2813.20,505.12 2820.20,512.13 2813.20,519.14 2820.20,526.15 2813.20,533.16 2820.20,540.17 2813.20,547.18 2820.20,554.19 2813.20,561.20 2820.20,568.21 2813.20,575.22 2820.20,582.23 2813.20,589.24 2820.20,596.25 2813.20,603.26 2820.20,610.27 2813.20,617.28 2820.20,624.29 2813.20,631.30 2820.20,638.31 2813.20,645.32 2820.20,652.33 2813.20,659.34 2820.20,666.35 2813.20,673.36 2820.20,680.37 2813.20,687.38 2820.20,694.39 2813.20,701.40 2820.20,708.41 2813.20,715.42 2820.20,722.43 2813.20,729.44 2820.20,736.45 2813.20,743.46 2820.20,750.47 2813.20,757.48 2820.20,764.49 2813.20,771.50 2820.20,778.51 2813.20,785.52 2820.20,792.53 2813.20,799.54 2820.20,806.55 2813.20,813.56 2820.20,820.57 2813.20,827.58 2820.20,834.59 2813.20,841.60 2820.20,848.61 2813.20,855.62 2820.20,862.63 2813.20,869.64 2820.20,876.65 2813.20,883.66 2820.20,890.67 2813.20,897.68 2820.20,904.69 2813.20,911.70 2820.20,918.71 2813.20,925.72 2820.20,932.73 2813.20,939.74 2820.20,946.75 2813.20,953.76 2820.20,960.77 2813.20,967.78 2820.20,974.79 2813.20,981.80 2820.20,988.81 2813.20,995.82 2820.20,1002.83 2813.20,1009.84 2820.20,1016.85 2813.20,1023.86 2820.20,1030.87 2813.20,1037.88 2820.20,1044.89 2813.20,1051.90 2820.20,1058.91 2813.20,1065.92 2820.20,1072.93 2813.20,1079.94 2820.20,1086.95 2813.20,1093.96 2820.20,1100.97 2813.20,1107.98 2820.20,1114.99 2813.20,1122.00 2820.20,1129.01 2813.20,1136.02 2820.20,1143.03 2813.20,1150.04 2820.20,1157.05 2813.20,1164.06 2820.20,1171.07 2813.20,1178.08 2820.20,1185.09 2813.20,1192.10 2820.20,1199.11 2813.20,1206.12 2820.20,1213.13 2813.20,1220.14 2820.20,1227.15 2813.20,1234.16 2820.20,1241.17 2813.20,1248.18 2820.20,1255.19 2813.20,1262.20 2820.20,1269.21 2813.20,1276.22 2820.20,1283.23 2813.20,1290.24 2820.20,1297.25 2813.20,1304.26 2820.20,1311.27 2813.20,1318.28 2820.20,1325.29 2813.20,1332.30 2820.20,1339.31 2813.20,1346.32 2820.20,1353.33 2813.20,1360.34 2820.20,1367.35 2813.20,1374.36 2820.20,1381.37 2813.20,1388.38 2820.20,1395.39 2813.20,1402.40 2820.20,1409.41 2813.20,1416.42 2820.20,1423.43 2813.20,1430.44 2820.20,1437.45 2813.20,1444.46 2820.20,1451.47 2813.20,1458.48 2820.20,1465.49 2813.20,1472.50 2820.20,1479.51 2813.20,1486.52 2820.20,1493.53 2813.20,1500.54 2820.20,1507.55 2813.20,1514.56 2820.20,1521.57 2813.20,1528.58 2820.20,1535.59 2813.20,1542.60 2820.20,1549.61 2813.20,1556.62 2820.20,1563.63 2813.20,1570.64 2820.20,1577.65 2813.20,1584.66 2820.20,1591.67 2813.20,1598.68 2820.20,1605.69 2813.20,1612.70 2820.20,1619.71 2813.20,1626.72 2820.20,1633.73 2813.20,1640.74 2820.20,1647.75 2813.20,1654.76 2820.20,1661.77 2813.20,1668.78 2820.20,1675.79 2813.20,1682.80 2820.20,1689.81 2813.20,1696.82 2820.20,1703.83 2813.20,1710.84 2820.20,1717.85 2813.20,1724.86 2820.20,1731.87 2813.20,1738.88 2820.20,1745.89 2813.20,1752.90 2820.20,1759.91 2813.20,1766.92 2820.20,1773.93 2813.20,1780.94 2820.20,1787.95 2813.20,1794.96 2820.20,1801.97 2813.20,1808.98 2820.20,1815.99 2813.20,1823.00 2820.20,1830.01 2813.20,1837.02 2820.20,1844.03 2813.20,1851.04 2820.20,1858.05 2813.20,1865.06 2820.20,1872.07 2813.20,1879.08 2820.20,1886.09 2813.20,1893.10 2820.20,1900.11 2813.20,1907.12 2820.20,1914.13 2813.20,1921.14 2820.20,1928.15 2813.20,1935.16 2820.20,1942.17 2813.20,1949.18 2820.20,1956.19 2813.20,1963.20 2820.20,1970.21 2813.20,1977.22 2820.20,1984.23 2813.20,1991.24 2820.20,1998.25 2813.20,2005.26 2820.20,2012.27 2813.20,2019.28 2831,2030" fill="#fff"/><polygon points="-10,2030 -10,2018 6.60,2011.80 13.60,2018.00 20.60,2011.80 27.60,2018.00 34.60,2011.80 41.60,2018.00 48.60,2011.80 55.60,2018.00 62.60,2011.80 69.60,2018.00 76.60,2011.80 83.60,2018.00 90.60,2011.80 97.60,2018.00 104.60,2011.80 111.60,2018.00 118.60,2011.80 125.60,2018.00 132.60,2011.80 139.60,2018.00 146.60,2011.80 153.60,2018.00 160.60,2011.80 167.60,2018.00 174.60,2011.80 181.60,2018.00 188.60,2011.80 195.60,2018.00 202.60,2011.80 209.60,2018.00 216.60,2011.80 223.60,2018.00 230.60,2011.80 237.60,2018.00 244.60,2011.80 251.60,2018.00 258.60,2011.80 265.60,2018.00 272.60,2011.80 279.60,2018.00 286.60,2011.80 293.60,2018.00 300.60,2011.80 307.60,2018.00 314.60,2011.80 321.60,2018.00 328.60,2011.80 335.60,2018.00 342.60,2011.80 349.60,2018.00 356.60,2011.80 363.60,2018.00 370.60,2011.80 377.60,2018.00 384.60,2011.80 391.60,2018.00 398.60,2011.80 405.60,2018.00 412.60,2011.80 419.60,2018.00 426.60,2011.80 433.60,2018.00 440.60,2011.80 447.60,2018.00 454.60,2011.80 461.60,2018.00 468.60,2011.80 475.60,2018.00 482.60,2011.80 489.60,2018.00 496.60,2011.80 503.60,2018.00 510.60,2011.80 517.60,2018.00 524.60,2011.80 531.60,2018.00 538.60,2011.80 545.60,2018.00 552.60,2011.80 559.60,2018.00 566.60,2011.80 573.60,2018.00 580.60,2011.80 587.60,2018.00 594.60,2011.80 601.60,2018.00 608.60,2011.80 615.60,2018.00 622.60,2011.80 629.60,2018.00 636.60,2011.80 643.60,2018.00 650.60,2011.80 657.60,2018.00 664.60,2011.80 671.60,2018.00 678.60,2011.80 685.60,2018.00 692.60,2011.80 699.60,2018.00 706.60,2011.80 713.60,2018.00 720.60,2011.80 727.60,2018.00 734.60,2011.80 741.60,2018.00 748.60,2011.80 755.60,2018.00 762.60,2011.80 769.60,2018.00 776.60,2011.80 783.60,2018.00 790.60,2011.80 797.60,2018.00 804.60,2011.80 811.60,2018.00 818.60,2011.80 825.60,2018.00 832.60,2011.80 839.60,2018.00 846.60,2011.80 853.60,2018.00 860.60,2011.80 867.60,2018.00 874.60,2011.80 881.60,2018.00 888.60,2011.80 895.60,2018.00 902.60,2011.80 909.60,2018.00 916.60,2011.80 923.60,2018.00 930.60,2011.80 937.60,2018.00 944.60,2011.80 951.60,2018.00 958.60,2011.80 965.60,2018.00 972.60,2011.80 979.60,2018.00 986.60,2011.80 993.60,2018.00 1000.60,2011.80 1007.60,2018.00 1014.60,2011.80 1021.60,2018.00 1028.60,2011.80 1035.60,2018.00 1042.60,2011.80 1049.60,2018.00 1056.60,2011.80 1063.60,2018.00 1070.60,2011.80 1077.60,2018.00 1084.60,2011.80 1091.60,2018.00 1098.60,2011.80 1105.60,2018.00 1112.60,2011.80 1119.60,2018.00 1126.60,2011.80 1133.60,2018.00 1140.60,2011.80 1147.60,2018.00 1154.60,2011.80 1161.60,2018.00 1168.60,2011.80 1175.60,2018.00 1182.60,2011.80 1189.60,2018.00 1196.60,2011.80 1203.60,2018.00 1210.60,2011.80 1217.60,2018.00 1224.60,2011.80 1231.60,2018.00 1238.60,2011.80 1245.60,2018.00 1252.60,2011.80 1259.60,2018.00 1266.60,2011.80 1273.60,2018.00 1280.60,2011.80 1287.60,2018.00 1294.60,2011.80 1301.60,2018.00 1308.60,2011.80 1315.60,2018.00 1322.60,2011.80 1329.60,2018.00 1336.60,2011.80 1343.60,2018.00 1350.60,2011.80 1357.60,2018.00 1364.60,2011.80 1371.60,2018.00 1378.60,2011.80 1385.60,2018.00 1392.60,2011.80 1399.60,2018.00 1406.60,2011.80 1413.60,2018.00 1420.60,2011.80 1427.60,2018.00 1434.60,2011.80 1441.60,2018.00 1448.60,2011.80 1455.60,2018.00 1462.60,2011.80 1469.60,2018.00 1476.60,2011.80 1483.60,2018.00 1490.60,2011.80 1497.60,2018.00 1504.60,2011.80 1511.60,2018.00 1518.60,2011.80 1525.60,2018.00 1532.60,2011.80 1539.60,2018.00 1546.60,2011.80 1553.60,2018.00 1560.60,2011.80 1567.60,2018.00 1574.60,2011.80 1581.60,2018.00 1588.60,2011.80 1595.60,2018.00 1602.60,2011.80 1609.60,2018.00 1616.60,2011.80 1623.60,2018.00 1630.60,2011.80 1637.60,2018.00 1644.60,2011.80 1651.60,2018.00 1658.60,2011.80 1665.60,2018.00 1672.60,2011.80 1679.60,2018.00 1686.60,2011.80 1693.60,2018.00 1700.60,2011.80 1707.60,2018.00 1714.60,2011.80 1721.60,2018.00 1728.60,2011.80 1735.60,2018.00 1742.60,2011.80 1749.60,2018.00 1756.60,2011.80 1763.60,2018.00 1770.60,2011.80 1777.60,2018.00 1784.60,2011.80 1791.60,2018.00 1798.60,2011.80 1805.60,2018.00 1812.60,2011.80 1819.60,2018.00 1826.60,2011.80 1833.60,2018.00 1840.60,2011.80 1847.60,2018.00 1854.60,2011.80 1861.60,2018.00 1868.60,2011.80 1875.60,2018.00 1882.60,2011.80 1889.60,2018.00 1896.60,2011.80 1903.60,2018.00 1910.60,2011.80 1917.60,2018.00 1924.60,2011.80 1931.60,2018.00 1938.60,2011.80 1945.60,2018.00 1952.60,2011.80 1959.60,2018.00 1966.60,2011.80 1973.60,2018.00 1980.60,2011.80 1987.60,2018.00 1994.60,2011.80 2001.60,2018.00 2008.60,2011.80 2015.60,2018.00 2022.60,2011.80 2029.60,2018.00 2036.60,2011.80 2043.60,2018.00 2050.60,2011.80 2057.60,2018.00 2064.60,2011.80 2071.60,2018.00 2078.60,2011.80 2085.60,2018.00 2092.60,2011.80 2099.60,2018.00 2106.60,2011.80 2113.60,2018.00 2120.60,2011.80 2127.60,2018.00 2134.60,2011.80 2141.60,2018.00 2148.60,2011.80 2155.60,2018.00 2162.60,2011.80 2169.60,2018.00 2176.60,2011.80 2183.60,2018.00 2190.60,2011.80 2197.60,2018.00 2204.60,2011.80 2211.60,2018.00 2218.60,2011.80 2225.60,2018.00 2232.60,2011.80 2239.60,2018.00 2246.60,2011.80 2253.60,2018.00 2260.60,2011.80 2267.60,2018.00 2274.60,2011.80 2281.60,2018.00 2288.60,2011.80 2295.60,2018.00 2302.60,2011.80 2309.60,2018.00 2316.60,2011.80 2323.60,2018.00 2330.60,2011.80 2337.60,2018.00 2344.60,2011.80 2351.60,2018.00 2358.60,2011.80 2365.60,2018.00 2372.60,2011.80 2379.60,2018.00 2386.60,2011.80 2393.60,2018.00 2400.60,2011.80 2407.60,2018.00 2414.60,2011.80 2421.60,2018.00 2428.60,2011.80 2435.60,2018.00 2442.60,2011.80 2449.60,2018.00 2456.60,2011.80 2463.60,2018.00 2470.60,2011.80 2477.60,2018.00 2484.60,2011.80 2491.60,2018.00 2498.60,2011.80 2505.60,2018.00 2512.60,2011.80 2519.60,2018.00 2526.60,2011.80 2533.60,2018.00 2540.60,2011.80 2547.60,2018.00 2554.60,2011.80 2561.60,2018.00 2568.60,2011.80 2575.60,2018.00 2582.60,2011.80 2589.60,2018.00 2596.60,2011.80 2603.60,2018.00 2610.60,2011.80 2617.60,2018.00 2624.60,2011.80 2631.60,2018.00 2638.60,2011.80 2645.60,2018.00 2652.60,2011.80 2659.60,2018.00 2666.60,2011.80 2673.60,2018.00 2680.60,2011.80 2687.60,2018.00 2694.60,2011.80 2701.60,2018.00 2708.60,2011.80 2715.60,2018.00 2722.60,2011.80 2729.60,2018.00 2736.60,2011.80 2743.60,2018.00 2750.60,2011.80 2757.60,2018.00 2764.60,2011.80 2771.60,2018.00 2778.60,2011.80 2785.60,2018.00 2792.60,2011.80 2799.60,2018.00 2806.60,2011.80 2813.60,2018.00 2820.60,2011.80 2827.60,2018.00 2831,2030" fill="#fff"/><polyline points="2813.20,0.40 2820.20,7.41 2813.20,14.42 2820.20,21.43 2813.20,28.44 2820.20,35.45 2813.20,42.46 2820.20,49.47 2813.20,56.48 2820.20,63.49 2813.20,70.50 2820.20,77.51 2813.20,84.52 2820.20,91.53 2813.20,98.54 2820.20,105.55 2813.20,112.56 2820.20,119.57 2813.20,126.58 2820.20,133.59 2813.20,140.60 2820.20,147.61 2813.20,154.62 2820.20,161.63 2813.20,168.64 2820.20,175.65 2813.20,182.66 2820.20,189.67 2813.20,196.68 2820.20,203.69 2813.20,210.70 2820.20,217.71 2813.20,224.72 2820.20,231.73 2813.20,238.74 2820.20,245.75 2813.20,252.76 2820.20,259.77 2813.20,266.78 2820.20,273.79 2813.20,280.80 2820.20,287.81 2813.20,294.82 2820.20,301.83 2813.20,308.84 2820.20,315.85 2813.20,322.86 2820.20,329.87 2813.20,336.88 2820.20,343.89 2813.20,350.90 2820.20,357.91 2813.20,364.92 2820.20,371.93 2813.20,378.94 2820.20,385.95 2813.20,392.96 2820.20,399.97 2813.20,406.98 2820.20,413.99 2813.20,421.00 2820.20,428.01 2813.20,435.02 2820.20,442.03 2813.20,449.04 2820.20,456.05 2813.20,463.06 2820.20,470.07 2813.20,477.08 2820.20,484.09 2813.20,491.10 2820.20,498.11 2813.20,505.12 2820.20,512.13 2813.20,519.14 2820.20,526.15 2813.20,533.16 2820.20,540.17 2813.20,547.18 2820.20,554.19 2813.20,561.20 2820.20,568.21 2813.20,575.22 2820.20,582.23 2813.20,589.24 2820.20,596.25 2813.20,603.26 2820.20,610.27 2813.20,617.28 2820.20,624.29 2813.20,631.30 2820.20,638.31 2813.20,645.32 2820.20,652.33 2813.20,659.34 2820.20,666.35 2813.20,673.36 2820.20,680.37 2813.20,687.38 2820.20,694.39 2813.20,701.40 2820.20,708.41 2813.20,715.42 2820.20,722.43 2813.20,729.44 2820.20,736.45 2813.20,743.46 2820.20,750.47 2813.20,757.48 2820.20,764.49 2813.20,771.50 2820.20,778.51 2813.20,785.52 2820.20,792.53 2813.20,799.54 2820.20,806.55 2813.20,813.56 2820.20,820.57 2813.20,827.58 2820.20,834.59 2813.20,841.60 2820.20,848.61 2813.20,855.62 2820.20,862.63 2813.20,869.64 2820.20,876.65 2813.20,883.66 2820.20,890.67 2813.20,897.68 2820.20,904.69 2813.20,911.70 2820.20,918.71 2813.20,925.72 2820.20,932.73 2813.20,939.74 2820.20,946.75 2813.20,953.76 2820.20,960.77 2813.20,967.78 2820.20,974.79 2813.20,981.80 2820.20,988.81 2813.20,995.82 2820.20,1002.83 2813.20,1009.84 2820.20,1016.85 2813.20,1023.86 2820.20,1030.87 2813.20,1037.88 2820.20,1044.89 2813.20,1051.90 2820.20,1058.91 2813.20,1065.92 2820.20,1072.93 2813.20,1079.94 2820.20,1086.95 2813.20,1093.96 2820.20,1100.97 2813.20,1107.98 2820.20,1114.99 2813.20,1122.00 2820.20,1129.01 2813.20,1136.02 2820.20,1143.03 2813.20,1150.04 2820.20,1157.05 2813.20,1164.06 2820.20,1171.07 2813.20,1178.08 2820.20,1185.09 2813.20,1192.10 2820.20,1199.11 2813.20,1206.12 2820.20,1213.13 2813.20,1220.14 2820.20,1227.15 2813.20,1234.16 2820.20,1241.17 2813.20,1248.18 2820.20,1255.19 2813.20,1262.20 2820.20,1269.21 2813.20,1276.22 2820.20,1283.23 2813.20,1290.24 2820.20,1297.25 2813.20,1304.26 2820.20,1311.27 2813.20,1318.28 2820.20,1325.29 2813.20,1332.30 2820.20,1339.31 2813.20,1346.32 2820.20,1353.33 2813.20,1360.34 2820.20,1367.35 2813.20,1374.36 2820.20,1381.37 2813.20,1388.38 2820.20,1395.39 2813.20,1402.40 2820.20,1409.41 2813.20,1416.42 2820.20,1423.43 2813.20,1430.44 2820.20,1437.45 2813.20,1444.46 2820.20,1451.47 2813.20,1458.48 2820.20,1465.49 2813.20,1472.50 2820.20,1479.51 2813.20,1486.52 2820.20,1493.53 2813.20,1500.54 2820.20,1507.55 2813.20,1514.56 2820.20,1521.57 2813.20,1528.58 2820.20,1535.59 2813.20,1542.60 2820.20,1549.61 2813.20,1556.62 2820.20,1563.63 2813.20,1570.64 2820.20,1577.65 2813.20,1584.66 2820.20,1591.67 2813.20,1598.68 2820.20,1605.69 2813.20,1612.70 2820.20,1619.71 2813.20,1626.72 2820.20,1633.73 2813.20,1640.74 2820.20,1647.75 2813.20,1654.76 2820.20,1661.77 2813.20,1668.78 2820.20,1675.79 2813.20,1682.80 2820.20,1689.81 2813.20,1696.82 2820.20,1703.83 2813.20,1710.84 2820.20,1717.85 2813.20,1724.86 2820.20,1731.87 2813.20,1738.88 2820.20,1745.89 2813.20,1752.90 2820.20,1759.91 2813.20,1766.92 2820.20,1773.93 2813.20,1780.94 2820.20,1787.95 2813.20,1794.96 2820.20,1801.97 2813.20,1808.98 2820.20,1815.99 2813.20,1823.00 2820.20,1830.01 2813.20,1837.02 2820.20,1844.03 2813.20,1851.04 2820.20,1858.05 2813.20,1865.06 2820.20,1872.07 2813.20,1879.08 2820.20,1886.09 2813.20,1893.10 2820.20,1900.11 2813.20,1907.12 2820.20,1914.13 2813.20,1921.14 2820.20,1928.15 2813.20,1935.16 2820.20,1942.17 2813.20,1949.18 2820.20,1956.19 2813.20,1963.20 2820.20,1970.21 2813.20,1977.22 2820.20,1984.23 2813.20,1991.24 2820.20,1998.25 2813.20,2005.26 2820.20,2012.27 2813.20,2019.28" fill="none" stroke="#000" stroke-width="1.7"/><polyline points="0,2018 6.60,2011.80 13.60,2018.00 20.60,2011.80 27.60,2018.00 34.60,2011.80 41.60,2018.00 48.60,2011.80 55.60,2018.00 62.60,2011.80 69.60,2018.00 76.60,2011.80 83.60,2018.00 90.60,2011.80 97.60,2018.00 104.60,2011.80 111.60,2018.00 118.60,2011.80 125.60,2018.00 132.60,2011.80 139.60,2018.00 146.60,2011.80 153.60,2018.00 160.60,2011.80 167.60,2018.00 174.60,2011.80 181.60,2018.00 188.60,2011.80 195.60,2018.00 202.60,2011.80 209.60,2018.00 216.60,2011.80 223.60,2018.00 230.60,2011.80 237.60,2018.00 244.60,2011.80 251.60,2018.00 258.60,2011.80 265.60,2018.00 272.60,2011.80 279.60,2018.00 286.60,2011.80 293.60,2018.00 300.60,2011.80 307.60,2018.00 314.60,2011.80 321.60,2018.00 328.60,2011.80 335.60,2018.00 342.60,2011.80 349.60,2018.00 356.60,2011.80 363.60,2018.00 370.60,2011.80 377.60,2018.00 384.60,2011.80 391.60,2018.00 398.60,2011.80 405.60,2018.00 412.60,2011.80 419.60,2018.00 426.60,2011.80 433.60,2018.00 440.60,2011.80 447.60,2018.00 454.60,2011.80 461.60,2018.00 468.60,2011.80 475.60,2018.00 482.60,2011.80 489.60,2018.00 496.60,2011.80 503.60,2018.00 510.60,2011.80 517.60,2018.00 524.60,2011.80 531.60,2018.00 538.60,2011.80 545.60,2018.00 552.60,2011.80 559.60,2018.00 566.60,2011.80 573.60,2018.00 580.60,2011.80 587.60,2018.00 594.60,2011.80 601.60,2018.00 608.60,2011.80 615.60,2018.00 622.60,2011.80 629.60,2018.00 636.60,2011.80 643.60,2018.00 650.60,2011.80 657.60,2018.00 664.60,2011.80 671.60,2018.00 678.60,2011.80 685.60,2018.00 692.60,2011.80 699.60,2018.00 706.60,2011.80 713.60,2018.00 720.60,2011.80 727.60,2018.00 734.60,2011.80 741.60,2018.00 748.60,2011.80 755.60,2018.00 762.60,2011.80 769.60,2018.00 776.60,2011.80 783.60,2018.00 790.60,2011.80 797.60,2018.00 804.60,2011.80 811.60,2018.00 818.60,2011.80 825.60,2018.00 832.60,2011.80 839.60,2018.00 846.60,2011.80 853.60,2018.00 860.60,2011.80 867.60,2018.00 874.60,2011.80 881.60,2018.00 888.60,2011.80 895.60,2018.00 902.60,2011.80 909.60,2018.00 916.60,2011.80 923.60,2018.00 930.60,2011.80 937.60,2018.00 944.60,2011.80 951.60,2018.00 958.60,2011.80 965.60,2018.00 972.60,2011.80 979.60,2018.00 986.60,2011.80 993.60,2018.00 1000.60,2011.80 1007.60,2018.00 1014.60,2011.80 1021.60,2018.00 1028.60,2011.80 1035.60,2018.00 1042.60,2011.80 1049.60,2018.00 1056.60,2011.80 1063.60,2018.00 1070.60,2011.80 1077.60,2018.00 1084.60,2011.80 1091.60,2018.00 1098.60,2011.80 1105.60,2018.00 1112.60,2011.80 1119.60,2018.00 1126.60,2011.80 1133.60,2018.00 1140.60,2011.80 1147.60,2018.00 1154.60,2011.80 1161.60,2018.00 1168.60,2011.80 1175.60,2018.00 1182.60,2011.80 1189.60,2018.00 1196.60,2011.80 1203.60,2018.00 1210.60,2011.80 1217.60,2018.00 1224.60,2011.80 1231.60,2018.00 1238.60,2011.80 1245.60,2018.00 1252.60,2011.80 1259.60,2018.00 1266.60,2011.80 1273.60,2018.00 1280.60,2011.80 1287.60,2018.00 1294.60,2011.80 1301.60,2018.00 1308.60,2011.80 1315.60,2018.00 1322.60,2011.80 1329.60,2018.00 1336.60,2011.80 1343.60,2018.00 1350.60,2011.80 1357.60,2018.00 1364.60,2011.80 1371.60,2018.00 1378.60,2011.80 1385.60,2018.00 1392.60,2011.80 1399.60,2018.00 1406.60,2011.80 1413.60,2018.00 1420.60,2011.80 1427.60,2018.00 1434.60,2011.80 1441.60,2018.00 1448.60,2011.80 1455.60,2018.00 1462.60,2011.80 1469.60,2018.00 1476.60,2011.80 1483.60,2018.00 1490.60,2011.80 1497.60,2018.00 1504.60,2011.80 1511.60,2018.00 1518.60,2011.80 1525.60,2018.00 1532.60,2011.80 1539.60,2018.00 1546.60,2011.80 1553.60,2018.00 1560.60,2011.80 1567.60,2018.00 1574.60,2011.80 1581.60,2018.00 1588.60,2011.80 1595.60,2018.00 1602.60,2011.80 1609.60,2018.00 1616.60,2011.80 1623.60,2018.00 1630.60,2011.80 1637.60,2018.00 1644.60,2011.80 1651.60,2018.00 1658.60,2011.80 1665.60,2018.00 1672.60,2011.80 1679.60,2018.00 1686.60,2011.80 1693.60,2018.00 1700.60,2011.80 1707.60,2018.00 1714.60,2011.80 1721.60,2018.00 1728.60,2011.80 1735.60,2018.00 1742.60,2011.80 1749.60,2018.00 1756.60,2011.80 1763.60,2018.00 1770.60,2011.80 1777.60,2018.00 1784.60,2011.80 1791.60,2018.00 1798.60,2011.80 1805.60,2018.00 1812.60,2011.80 1819.60,2018.00 1826.60,2011.80 1833.60,2018.00 1840.60,2011.80 1847.60,2018.00 1854.60,2011.80 1861.60,2018.00 1868.60,2011.80 1875.60,2018.00 1882.60,2011.80 1889.60,2018.00 1896.60,2011.80 1903.60,2018.00 1910.60,2011.80 1917.60,2018.00 1924.60,2011.80 1931.60,2018.00 1938.60,2011.80 1945.60,2018.00 1952.60,2011.80 1959.60,2018.00 1966.60,2011.80 1973.60,2018.00 1980.60,2011.80 1987.60,2018.00 1994.60,2011.80 2001.60,2018.00 2008.60,2011.80 2015.60,2018.00 2022.60,2011.80 2029.60,2018.00 2036.60,2011.80 2043.60,2018.00 2050.60,2011.80 2057.60,2018.00 2064.60,2011.80 2071.60,2018.00 2078.60,2011.80 2085.60,2018.00 2092.60,2011.80 2099.60,2018.00 2106.60,2011.80 2113.60,2018.00 2120.60,2011.80 2127.60,2018.00 2134.60,2011.80 2141.60,2018.00 2148.60,2011.80 2155.60,2018.00 2162.60,2011.80 2169.60,2018.00 2176.60,2011.80 2183.60,2018.00 2190.60,2011.80 2197.60,2018.00 2204.60,2011.80 2211.60,2018.00 2218.60,2011.80 2225.60,2018.00 2232.60,2011.80 2239.60,2018.00 2246.60,2011.80 2253.60,2018.00 2260.60,2011.80 2267.60,2018.00 2274.60,2011.80 2281.60,2018.00 2288.60,2011.80 2295.60,2018.00 2302.60,2011.80 2309.60,2018.00 2316.60,2011.80 2323.60,2018.00 2330.60,2011.80 2337.60,2018.00 2344.60,2011.80 2351.60,2018.00 2358.60,2011.80 2365.60,2018.00 2372.60,2011.80 2379.60,2018.00 2386.60,2011.80 2393.60,2018.00 2400.60,2011.80 2407.60,2018.00 2414.60,2011.80 2421.60,2018.00 2428.60,2011.80 2435.60,2018.00 2442.60,2011.80 2449.60,2018.00 2456.60,2011.80 2463.60,2018.00 2470.60,2011.80 2477.60,2018.00 2484.60,2011.80 2491.60,2018.00 2498.60,2011.80 2505.60,2018.00 2512.60,2011.80 2519.60,2018.00 2526.60,2011.80 2533.60,2018.00 2540.60,2011.80 2547.60,2018.00 2554.60,2011.80 2561.60,2018.00 2568.60,2011.80 2575.60,2018.00 2582.60,2011.80 2589.60,2018.00 2596.60,2011.80 2603.60,2018.00 2610.60,2011.80 2617.60,2018.00 2624.60,2011.80 2631.60,2018.00 2638.60,2011.80 2645.60,2018.00 2652.60,2011.80 2659.60,2018.00 2666.60,2011.80 2673.60,2018.00 2680.60,2011.80 2687.60,2018.00 2694.60,2011.80 2701.60,2018.00 2708.60,2011.80 2715.60,2018.00 2722.60,2011.80 2729.60,2018.00 2736.60,2011.80 2743.60,2018.00 2750.60,2011.80 2757.60,2018.00 2764.60,2011.80 2771.60,2018.00 2778.60,2011.80 2785.60,2018.00 2792.60,2011.80 2799.60,2018.00 2806.60,2011.80 2813.60,2018.00 2820.60,2011.80 2827.60,2018.00" fill="none" stroke="#000" stroke-width="1.7"/></svg>
</body></html>
